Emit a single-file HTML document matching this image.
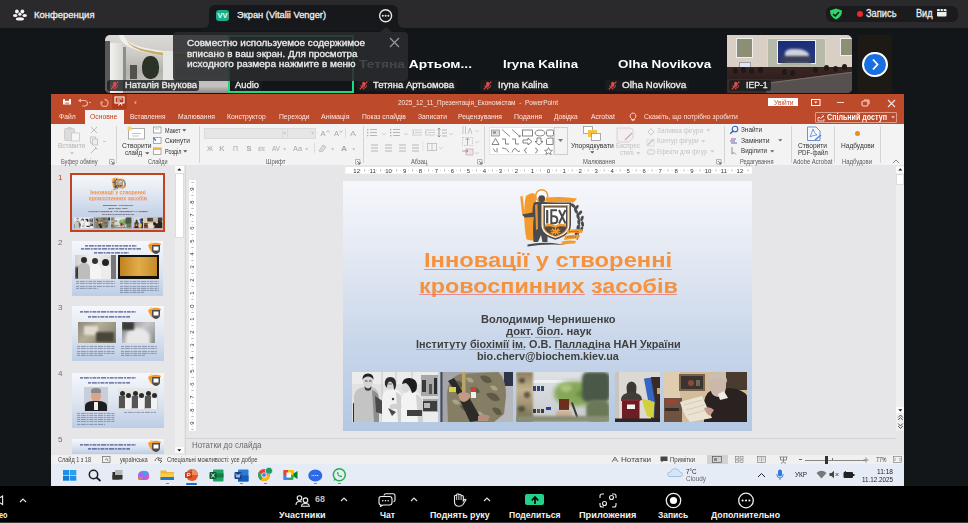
<!DOCTYPE html>
<html><head><meta charset="utf-8">
<style>
*{margin:0;padding:0;box-sizing:border-box}
html,body{width:968px;height:523px;overflow:hidden;background:#131619;font-family:"Liberation Sans",sans-serif}
.a{position:absolute;display:block}
.t{position:absolute;white-space:nowrap;line-height:1;transform-origin:0 50%}
#w{position:absolute;left:0;top:0;width:968px;height:523px;overflow:hidden;filter:blur(0.4px)}
</style></head><body><div id="w">
<div class="a" style="left:0px;top:0px;width:968px;height:28px;background:#2a2a2c;"></div>
<div class="a" style="left:203px;top:22px;width:6px;height:9px;background:#16181b;"></div>
<div class="a" style="left:398px;top:22px;width:6px;height:9px;background:#16181b;"></div>
<div class="a" style="left:197px;top:16px;width:12px;height:12px;background:#2a2a2c;border-radius:0 0 6px 0"></div>
<div class="a" style="left:398px;top:16px;width:12px;height:12px;background:#2a2a2c;border-radius:0 0 0 6px"></div>
<div class="a" style="left:209px;top:5px;width:189px;height:26px;background:#16181b;border-radius:6px 6px 0 0"></div>
<svg class="a" style="left:12px;top:8px;" width="16" height="14" viewBox="0 0 16 14"><g fill="#f4f4f4"><circle cx="4.9" cy="3.5" r="1.9"/><circle cx="10.4" cy="3.5" r="1.9"/><ellipse cx="3.2" cy="7.4" rx="2.2" ry="1.5"/><ellipse cx="12.7" cy="7.4" rx="2.2" ry="1.5"/><circle cx="7.9" cy="6.2" r="1.6"/><ellipse cx="7.9" cy="10.9" rx="4.1" ry="1.6"/></g></svg>
<div class="t" style="transform:scaleX(1.028);left:34px;top:10.91px;font-size:9.2px;color:#ececec;-webkit-text-stroke:0.3px currentColor;">Конференция</div>
<div class="a" style="left:216px;top:10px;width:13px;height:11px;background:#1fae8a;border-radius:3px"></div>
<div class="t" style="left:217.5px;top:12.12px;font-size:7.5px;color:#e8fff6;font-weight:bold;">VV</div>
<div class="t" style="transform:scaleX(1.011);left:237px;top:11.41px;font-size:9.2px;color:#f0f0f0;-webkit-text-stroke:0.3px currentColor;">Экран (Vitalii Venger)</div>
<svg class="a" style="left:378px;top:8px;" width="16" height="16" viewBox="0 0 16 16"><circle cx="7.6" cy="7.7" r="6" fill="none" stroke="#e6e6e6" stroke-width="1.4"/><circle cx="4.8" cy="7.7" r="1" fill="#e6e6e6"/><circle cx="7.6" cy="7.7" r="1" fill="#e6e6e6"/><circle cx="10.4" cy="7.7" r="1" fill="#e6e6e6"/></svg>
<div class="a" style="left:826px;top:6px;width:132px;height:16px;background:#1b1b1d;border-radius:6px"></div>
<svg class="a" style="left:829px;top:8px;" width="14" height="12" viewBox="0 0 14 12"><path d="M7 0.5 L13 2.5 Q13 9 7 11.5 Q1 9 1 2.5Z" fill="#2cd66c"/><path d="M4 6 L6.2 8 L10 4" fill="none" stroke="#111" stroke-width="1.5"/></svg>
<div class="a" style="left:856.5px;top:10.7px;width:6px;height:6px;border-radius:50%;background:#ea2a2a"></div>
<div class="t" style="transform:scaleX(0.930);left:866px;top:9.40px;font-size:10px;color:#ececec;-webkit-text-stroke:0.3px currentColor;">Запись</div>
<div class="t" style="transform:scaleX(0.912);left:915.5px;top:9.40px;font-size:10px;color:#ececec;-webkit-text-stroke:0.3px currentColor;">Вид</div>
<svg class="a" style="left:937px;top:9px;" width="10" height="8" viewBox="0 0 10 8"><rect x="0" y="0" width="9.5" height="7.5" rx="1" fill="#eee"/><path d="M0 2.5H9.5M3.2 0V2.5M6.3 0V2.5" stroke="#252527" stroke-width="0.9"/></svg>
<div class="a" style="left:105px;top:35px;width:124px;height:58px;border-radius:5px 0 0 5px;overflow:hidden;background:linear-gradient(180deg,#dcdad6 0%,#cfcdc8 30%,#b4b2ad 62%,#c4c3c0 88%,#8a8986 100%)"><div class="a" style="left:14px;top:-22px;width:130px;height:44px;border-radius:50%;border:5px solid #efefed;border-top-color:#f4f4f2"></div><div class="a" style="left:22px;top:-14px;width:120px;height:36px;border-radius:50%;border-bottom:3px solid #c6ad70"></div><div class="a" style="left:0;top:6px;width:5px;height:52px;background:#5a5955"></div><div class="a" style="left:5px;top:8px;width:13px;height:50px;background:linear-gradient(90deg,#f2f2f0,#d6d6d2)"></div><div class="a" style="left:18px;top:12px;width:3px;height:46px;background:#8e8d88"></div><div class="a" style="left:25px;top:30px;width:7px;height:14px;background:#55514b"></div><div class="a" style="left:37px;top:21px;width:17px;height:23px;border-radius:45%;background:#2b3326"></div><div class="a" style="left:58px;top:16px;width:12px;height:30px;background:#e6e6e4"></div></div>
<div class="a" style="left:228px;top:35px;width:126px;height:58px;background:#131619;border:2px solid #1fd97f"></div>
<div class="t" style="transform:scaleX(1.311);left:359px;top:59.01px;font-size:10.5px;color:#ffffff;font-weight:bold;">Тетяна Артьом...</div>
<div class="t" style="transform:scaleX(1.260);left:503px;top:59.01px;font-size:10.5px;color:#ffffff;font-weight:bold;">Iryna Kalina</div>
<div class="t" style="transform:scaleX(1.279);left:618.3px;top:59.01px;font-size:10.5px;color:#ffffff;font-weight:bold;">Olha Novikova</div>
<div class="a" style="left:727px;top:35px;width:125px;height:58px;border-radius:0 5px 5px 0;overflow:hidden;background:#d9cfc4"><div class="a" style="left:9.4px;top:3.4px;width:16.6px;height:19.6px;background:#8c8e76;border:1px solid #eef0ee"></div><div class="a" style="left:113px;top:3.4px;width:13px;height:17.6px;background:#8c8e76;border:1px solid #eef0ee"></div><div class="a" style="left:39.6px;top:2.7px;width:59.8px;height:31px;background:#b7baa9;border:1px solid #d8dcd0"></div><div class="a" style="left:49.7px;top:5.4px;width:39px;height:24px;background:linear-gradient(#1b2d78,#23357e 60%,#2a3468);border:1.5px solid #eef0f2"></div><div class="a" style="left:58px;top:14px;width:24px;height:13px;background:#cfd3dc;border-radius:30% 50% 10% 10%;filter:blur(0.8px)"></div><div class="a" style="left:54px;top:21px;width:30px;height:7px;background:#3a3f55;filter:blur(0.8px)"></div><div class="a" style="left:12px;top:26.5px;width:11.5px;height:10px;background:#dfe6f2;border:1px solid #9aa0a8"></div><div class="a" style="left:0;top:32px;width:125px;height:13px;background:linear-gradient(#3c2624,#2e1e1d);filter:blur(0.6px)"></div><div class="a" style="left:6px;top:33px;width:5px;height:6px;border-radius:50%;background:#1e1a1a;filter:blur(0.5px)"></div><div class="a" style="left:14px;top:32px;width:5px;height:6px;border-radius:50%;background:#1e1a1a;filter:blur(0.5px)"></div><div class="a" style="left:22px;top:33px;width:5px;height:6px;border-radius:50%;background:#1e1a1a;filter:blur(0.5px)"></div><div class="a" style="left:31px;top:32px;width:5px;height:6px;border-radius:50%;background:#1e1a1a;filter:blur(0.5px)"></div><div class="a" style="left:55px;top:34px;width:5px;height:6px;border-radius:50%;background:#1e1a1a;filter:blur(0.5px)"></div><div class="a" style="left:63px;top:35px;width:5px;height:6px;border-radius:50%;background:#1e1a1a;filter:blur(0.5px)"></div><div class="a" style="left:86px;top:32px;width:5px;height:6px;border-radius:50%;background:#1e1a1a;filter:blur(0.5px)"></div><div class="a" style="left:97px;top:30px;width:5px;height:6px;border-radius:50%;background:#1e1a1a;filter:blur(0.5px)"></div><div class="a" style="left:106px;top:31px;width:5px;height:6px;border-radius:50%;background:#1e1a1a;filter:blur(0.5px)"></div><div class="a" style="left:115px;top:29px;width:5px;height:6px;border-radius:50%;background:#1e1a1a;filter:blur(0.5px)"></div><div class="a" style="left:0;top:44px;width:125px;height:14px;background:#3a2c2a"></div><div class="a" style="left:38px;top:47.5px;width:100px;height:30px;background:#56504f;border-top:1.5px solid #7a6e66;transform:rotate(-7.3deg);transform-origin:0 0"></div></div>
<div class="a" style="left:857.5px;top:35px;width:34.5px;height:58px;background:#1d1915;"></div>
<div class="a" style="left:862.4px;top:51.7px;width:25.2px;height:25.2px;border-radius:50%;background:#1a6fe0;border:2px solid #fff"></div>
<svg class="a" style="left:870px;top:58px;" width="10" height="13" viewBox="0 0 10 13"><path d="M3 1.5 L7.5 6.5 L3 11.5" fill="none" stroke="#fff" stroke-width="1.8"/></svg>
<div class="a" style="left:107.4px;top:80.2px;width:91.4px;height:11.2px;background:rgba(28,29,32,0.82);border-radius:3px"></div>
<svg class="a" style="left:109.60000000000001px;top:81.2px;" width="9" height="9" viewBox="0 0 9 9"><rect x="3.2" y="0.8" width="3" height="5" rx="1.5" fill="#e24b4b"/><path d="M1.8 4.2 Q1.8 7.2 4.7 7.2 Q7.6 7.2 7.6 4.2 M4.7 7.2 V8.6" fill="none" stroke="#e24b4b" stroke-width="0.9"/><path d="M0.8 8.4 L8.4 0.6" stroke="#e24b4b" stroke-width="1.1"/></svg>
<div class="t" style="transform:scaleX(1.129);left:124.5px;top:81.37px;font-size:8.3px;color:#ececec;-webkit-text-stroke:0.3px currentColor;">Наталія Внукова</div>
<div class="a" style="left:231px;top:80.2px;width:31px;height:11.2px;background:rgba(28,29,32,0.82);border-radius:3px"></div>
<div class="t" style="transform:scaleX(1.130);left:234.5px;top:81.37px;font-size:8.3px;color:#ececec;-webkit-text-stroke:0.3px currentColor;">Audio</div>
<div class="a" style="left:357px;top:80.2px;width:100px;height:11.2px;background:rgba(28,29,32,0.82);border-radius:3px"></div>
<svg class="a" style="left:359.2px;top:81.2px;" width="9" height="9" viewBox="0 0 9 9"><rect x="3.2" y="0.8" width="3" height="5" rx="1.5" fill="#e24b4b"/><path d="M1.8 4.2 Q1.8 7.2 4.7 7.2 Q7.6 7.2 7.6 4.2 M4.7 7.2 V8.6" fill="none" stroke="#e24b4b" stroke-width="0.9"/><path d="M0.8 8.4 L8.4 0.6" stroke="#e24b4b" stroke-width="1.1"/></svg>
<div class="t" style="transform:scaleX(1.146);left:373px;top:81.37px;font-size:8.3px;color:#ececec;-webkit-text-stroke:0.3px currentColor;">Тетяна Артьомова</div>
<div class="a" style="left:480.4px;top:80.2px;width:70.6px;height:11.2px;background:rgba(28,29,32,0.82);border-radius:3px"></div>
<svg class="a" style="left:482.59999999999997px;top:81.2px;" width="9" height="9" viewBox="0 0 9 9"><rect x="3.2" y="0.8" width="3" height="5" rx="1.5" fill="#e24b4b"/><path d="M1.8 4.2 Q1.8 7.2 4.7 7.2 Q7.6 7.2 7.6 4.2 M4.7 7.2 V8.6" fill="none" stroke="#e24b4b" stroke-width="0.9"/><path d="M0.8 8.4 L8.4 0.6" stroke="#e24b4b" stroke-width="1.1"/></svg>
<div class="t" style="transform:scaleX(1.141);left:497.5px;top:81.37px;font-size:8.3px;color:#ececec;-webkit-text-stroke:0.3px currentColor;">Iryna Kalina</div>
<div class="a" style="left:605.4px;top:80.2px;width:83.6px;height:11.2px;background:rgba(28,29,32,0.82);border-radius:3px"></div>
<svg class="a" style="left:607.6px;top:81.2px;" width="9" height="9" viewBox="0 0 9 9"><rect x="3.2" y="0.8" width="3" height="5" rx="1.5" fill="#e24b4b"/><path d="M1.8 4.2 Q1.8 7.2 4.7 7.2 Q7.6 7.2 7.6 4.2 M4.7 7.2 V8.6" fill="none" stroke="#e24b4b" stroke-width="0.9"/><path d="M0.8 8.4 L8.4 0.6" stroke="#e24b4b" stroke-width="1.1"/></svg>
<div class="t" style="transform:scaleX(1.191);left:621.7px;top:81.37px;font-size:8.3px;color:#ececec;-webkit-text-stroke:0.3px currentColor;">Olha Novikova</div>
<div class="a" style="left:729px;top:80.2px;width:42px;height:11.2px;background:rgba(28,29,32,0.82);border-radius:3px"></div>
<svg class="a" style="left:731.2px;top:81.2px;" width="9" height="9" viewBox="0 0 9 9"><rect x="3.2" y="0.8" width="3" height="5" rx="1.5" fill="#e24b4b"/><path d="M1.8 4.2 Q1.8 7.2 4.7 7.2 Q7.6 7.2 7.6 4.2 M4.7 7.2 V8.6" fill="none" stroke="#e24b4b" stroke-width="0.9"/><path d="M0.8 8.4 L8.4 0.6" stroke="#e24b4b" stroke-width="1.1"/></svg>
<div class="t" style="transform:scaleX(1.040);left:746.4px;top:81.37px;font-size:8.3px;color:#ececec;-webkit-text-stroke:0.3px currentColor;">IEP-1</div>
<div class="a" style="left:173.3px;top:31.9px;width:234.7px;height:49.6px;background:rgba(42,43,46,0.88);border-radius:4px"></div>
<svg class="a" style="left:379px;top:27px;" width="14" height="6" viewBox="0 0 14 6"><path d="M0 6 L7 0 L14 6Z" fill="rgba(42,43,46,0.88)"/></svg>
<div class="t" style="transform:scaleX(1.101);left:186.6px;top:39.08px;font-size:9px;color:#ececec;-webkit-text-stroke:0.3px currentColor;">Совместно используемое содержимое</div>
<div class="t" style="transform:scaleX(1.099);left:186.6px;top:49.98px;font-size:9px;color:#ececec;-webkit-text-stroke:0.3px currentColor;">вписано в ваш экран. Для просмотра</div>
<div class="t" style="transform:scaleX(1.115);left:186.6px;top:60.48px;font-size:9px;color:#ececec;-webkit-text-stroke:0.3px currentColor;">исходного размера нажмите в меню</div>
<svg class="a" style="left:389px;top:37px;" width="11" height="11" viewBox="0 0 11 11"><path d="M1 1L10 10M10 1L1 10" stroke="#9a9a9c" stroke-width="1.2"/></svg>
<div class="a" style="left:51px;top:94.4px;width:853px;height:29.6px;background:#bd4a2b;"></div>
<div class="a" style="left:51px;top:124px;width:853px;height:41px;background:#f3f3f3;"></div>
<div class="a" style="left:51px;top:165px;width:853px;height:290px;background:#e6e6e9;"></div>
<div class="a" style="left:51px;top:455px;width:853px;height:9px;background:#f0f0f0;"></div>
<div class="a" style="left:51px;top:464px;width:853px;height:21.5px;background:#e6ecf5;"></div>
<svg class="a" style="left:63px;top:99px;" width="9" height="6" viewBox="0 0 9 6"><rect x="0" y="0" width="8" height="5.5" rx="0.6" fill="#fff"/><rect x="2" y="0" width="4" height="1.8" fill="#bd4a2b"/><rect x="1.8" y="3.3" width="4.4" height="2.2" fill="#d9a090"/></svg>
<svg class="a" style="left:77px;top:98px;" width="12" height="9" viewBox="0 0 12 9"><path d="M3 2.5 H7 Q10.5 2.5 10.5 5.5 Q10.5 8 7 8 H5" fill="none" stroke="#f0b3a0" stroke-width="1.2"/><path d="M1 2.5 L4 0.5 L4 4.5Z" fill="#f0b3a0"/></svg>
<div class="a" style="left:89px;top:102px;width:2px;height:1px;background:#e9a48f;"></div>
<svg class="a" style="left:99px;top:98px;" width="11" height="9" viewBox="0 0 11 9"><path d="M5.5 1.5 A3.5 3.5 0 1 1 2 5" fill="none" stroke="#f0a48c" stroke-width="1.3"/><path d="M1 4 L3 6.5 L4.2 3Z" fill="#f0a48c"/></svg>
<div class="a" style="left:112.3px;top:94px;width:14.4px;height:15px;background:#b03c1e;"></div>
<svg class="a" style="left:114px;top:96px;" width="11" height="11" viewBox="0 0 11 11"><rect x="1" y="1" width="9" height="6" fill="none" stroke="#fff" stroke-width="1.1"/><path d="M3 3H8M3 5H6" stroke="#fff" stroke-width="0.8"/><path d="M4 9.5 L7 7 L8 9.5" fill="none" stroke="#fff" stroke-width="1"/></svg>
<div class="t" style="transform:scaleX(1.123);left:134px;top:98.90px;font-size:8px;color:#f4d0c4;">‹</div>
<div class="t" style="transform:scaleX(0.808);left:398px;top:99.20px;font-size:8px;color:#f8e6e0;">2025_12_11_Презентація_Економістам&nbsp; - &nbsp;PowerPoint</div>
<div class="a" style="left:768.4px;top:98.3px;width:29.8px;height:7.9px;background:#ffffff;"></div>
<div class="t" style="transform:scaleX(0.894);left:773.5px;top:98.92px;font-size:7.5px;color:#c44b2a;">Увійти</div>
<svg class="a" style="left:811px;top:99px;" width="10" height="7" viewBox="0 0 10 7"><rect x="0.5" y="0.5" width="8.5" height="6" fill="none" stroke="#fff" stroke-width="1"/><path d="M3 2.5 L4.7 4.5 L6.5 2.5" fill="#fff"/></svg>
<div class="a" style="left:836.5px;top:102px;width:7px;height:1px;background:#f5d8ce;"></div>
<svg class="a" style="left:861px;top:98.5px;" width="9" height="8" viewBox="0 0 9 8"><rect x="1" y="2" width="6" height="5" rx="1.5" fill="none" stroke="#f5d8ce" stroke-width="1.1"/><path d="M3 1 H8 V5" fill="none" stroke="#f5d8ce" stroke-width="1"/></svg>
<svg class="a" style="left:886.5px;top:98.5px;" width="9" height="9" viewBox="0 0 9 9"><path d="M1 1L8 8M8 1L1 8" stroke="#f8e4dc" stroke-width="1.1"/></svg>
<div class="a" style="left:85.3px;top:109.8px;width:38.7px;height:14.2px;background:#f3f3f3;"></div>
<div class="t" style="transform:scaleX(0.844);left:59px;top:113.20px;font-size:8px;color:#fbe9e3;">Файл</div>
<div class="t" style="transform:scaleX(0.810);left:130.3px;top:113.20px;font-size:8px;color:#fbe9e3;">Вставлення</div>
<div class="t" style="transform:scaleX(0.845);left:178.3px;top:113.20px;font-size:8px;color:#fbe9e3;">Малювання</div>
<div class="t" style="transform:scaleX(0.848);left:227.3px;top:113.20px;font-size:8px;color:#fbe9e3;">Конструктор</div>
<div class="t" style="transform:scaleX(0.841);left:278.5px;top:113.20px;font-size:8px;color:#fbe9e3;">Переходи</div>
<div class="t" style="transform:scaleX(0.886);left:321px;top:113.20px;font-size:8px;color:#fbe9e3;">Анімація</div>
<div class="t" style="transform:scaleX(0.838);left:361.6px;top:113.20px;font-size:8px;color:#fbe9e3;">Показ слайдів</div>
<div class="t" style="transform:scaleX(0.838);left:417.6px;top:113.20px;font-size:8px;color:#fbe9e3;">Записати</div>
<div class="t" style="transform:scaleX(0.844);left:458px;top:113.20px;font-size:8px;color:#fbe9e3;">Рецензування</div>
<div class="t" style="transform:scaleX(0.867);left:514px;top:113.20px;font-size:8px;color:#fbe9e3;">Подання</div>
<div class="t" style="transform:scaleX(0.820);left:554.4px;top:113.20px;font-size:8px;color:#fbe9e3;">Довідка</div>
<div class="t" style="transform:scaleX(0.863);left:590.6px;top:113.20px;font-size:8px;color:#fbe9e3;">Acrobat</div>
<div class="t" style="transform:scaleX(0.847);left:90.3px;top:113.20px;font-size:8px;color:#c4431f;">Основне</div>
<svg class="a" style="left:629px;top:112px;" width="8" height="10" viewBox="0 0 8 10"><path d="M4 1 A3 3 0 0 1 6.5 5.5 Q5.5 6.5 5.5 7.5 H2.5 Q2.5 6.5 1.5 5.5 A3 3 0 0 1 4 1Z" fill="none" stroke="#fbe3da" stroke-width="0.9"/><path d="M2.7 8.6H5.3" stroke="#fbe3da" stroke-width="0.8"/></svg>
<div class="t" style="transform:scaleX(0.850);left:643.6px;top:113.20px;font-size:8px;color:#fbe3da;">Скажіть, що потрібно зробити</div>
<div class="a" style="left:814.7px;top:111.9px;width:82.3px;height:10.8px;background:transparent;border:1px solid rgba(255,220,205,0.55);border-radius:1px"></div>
<svg class="a" style="left:817px;top:113.5px;" width="8" height="8" viewBox="0 0 8 8"><path d="M1 7 V3.5 H3 M1 7 H7 V5" fill="none" stroke="#fde" stroke-width="0.9"/><path d="M3.5 5 Q4 2.5 6.5 2.2 M5.5 1 L7 2.2 L5.5 3.4" fill="none" stroke="#fde" stroke-width="0.9"/></svg>
<div class="t" style="transform:scaleX(0.837);left:827px;top:113.47px;font-size:8.5px;color:#ffffff;font-weight:bold;">Спільний доступ</div>
<svg class="a" style="left:890.5px;top:116.0px;" width="4.5" height="3" viewBox="0 0 4.5 3"><path d="M0.2 0.3 H4 L2.00 2.6Z" fill="#f5c8b8"/></svg>
<div class="a" style="left:116.3px;top:126px;width:1px;height:37px;background:#d4d4d4;"></div>
<div class="a" style="left:199.3px;top:126px;width:1px;height:37px;background:#d4d4d4;"></div>
<div class="a" style="left:363.2px;top:126px;width:1px;height:37px;background:#d4d4d4;"></div>
<div class="a" style="left:483.8px;top:126px;width:1px;height:37px;background:#d4d4d4;"></div>
<div class="a" style="left:723.9px;top:126px;width:1px;height:37px;background:#d4d4d4;"></div>
<div class="a" style="left:790.7px;top:126px;width:1px;height:37px;background:#d4d4d4;"></div>
<div class="a" style="left:834.3px;top:126px;width:1px;height:37px;background:#d4d4d4;"></div>
<div class="a" style="left:880.2px;top:126px;width:1px;height:37px;background:#d4d4d4;"></div>
<div class="t" style="transform:scaleX(0.793);left:60.8px;top:158.36px;font-size:7.2px;color:#5a5a5a;">Буфер обміну</div>
<div class="t" style="transform:scaleX(0.761);left:148px;top:158.36px;font-size:7.2px;color:#5a5a5a;">Слайди</div>
<div class="t" style="transform:scaleX(0.820);left:266.3px;top:158.36px;font-size:7.2px;color:#5a5a5a;">Шрифт</div>
<div class="t" style="transform:scaleX(0.808);left:410.5px;top:158.36px;font-size:7.2px;color:#5a5a5a;">Абзац</div>
<div class="t" style="transform:scaleX(0.811);left:583px;top:158.36px;font-size:7.2px;color:#5a5a5a;">Малювання</div>
<div class="t" style="transform:scaleX(0.792);left:740px;top:158.36px;font-size:7.2px;color:#5a5a5a;">Редагування</div>
<div class="t" style="transform:scaleX(0.838);left:792.5px;top:158.36px;font-size:7.2px;color:#5a5a5a;">Adobe Acrobat</div>
<div class="t" style="transform:scaleX(0.817);left:842px;top:158.36px;font-size:7.2px;color:#5a5a5a;">Надбудови</div>
<svg class="a" style="left:108.5px;top:158.5px;" width="6" height="6" viewBox="0 0 6 6"><path d="M0.5 0.5 H5 V5 H0.5Z" fill="none" stroke="#9a9a9a" stroke-width="0.7"/><path d="M2 2 L5 5 M3 5 H5 V3" fill="none" stroke="#666" stroke-width="0.8"/></svg>
<svg class="a" style="left:355px;top:158.5px;" width="6" height="6" viewBox="0 0 6 6"><path d="M0.5 0.5 H5 V5 H0.5Z" fill="none" stroke="#9a9a9a" stroke-width="0.7"/><path d="M2 2 L5 5 M3 5 H5 V3" fill="none" stroke="#666" stroke-width="0.8"/></svg>
<svg class="a" style="left:476.5px;top:158.5px;" width="6" height="6" viewBox="0 0 6 6"><path d="M0.5 0.5 H5 V5 H0.5Z" fill="none" stroke="#9a9a9a" stroke-width="0.7"/><path d="M2 2 L5 5 M3 5 H5 V3" fill="none" stroke="#666" stroke-width="0.8"/></svg>
<svg class="a" style="left:716px;top:158.5px;" width="6" height="6" viewBox="0 0 6 6"><path d="M0.5 0.5 H5 V5 H0.5Z" fill="none" stroke="#9a9a9a" stroke-width="0.7"/><path d="M2 2 L5 5 M3 5 H5 V3" fill="none" stroke="#666" stroke-width="0.8"/></svg>
<svg class="a" style="left:892px;top:159px;" width="8" height="5" viewBox="0 0 8 5"><path d="M1 4 L4 1 L7 4" fill="none" stroke="#777" stroke-width="0.9"/></svg>
<svg class="a" style="left:63px;top:126px;" width="19" height="16" viewBox="0 0 19 16"><rect x="1.5" y="2.5" width="10" height="12" rx="1" fill="#dcdcdc" stroke="#c8c8c8" stroke-width="0.8"/><rect x="4.5" y="1" width="4" height="2.5" rx="0.8" fill="#cfcfcf"/><rect x="8.5" y="7" width="8" height="8" fill="#f7f7f7" stroke="#c8c8c8" stroke-width="0.8"/></svg>
<div class="t" style="transform:scaleX(0.845);left:57.8px;top:142.22px;font-size:7.5px;color:#b4b4b4;">Вставити</div>
<svg class="a" style="left:69.5px;top:151.5px;" width="4.3" height="3" viewBox="0 0 4.3 3"><path d="M0.2 0.3 H3.8 L1.90 2.6Z" fill="#c0c0c0"/></svg>
<svg class="a" style="left:89px;top:126px;" width="10" height="29" viewBox="0 0 10 29"><path d="M2 1 L8 7 M8 1 L2 7" stroke="#b8b8b8" stroke-width="0.9"/><rect x="1.5" y="11" width="5" height="6" fill="none" stroke="#bbb" stroke-width="0.8"/><rect x="3.5" y="13" width="5" height="6" fill="#eee" stroke="#bbb" stroke-width="0.8"/><path d="M2 27 L7 22 M6 21 L8.5 23.5" stroke="#b8b8b8" stroke-width="1"/></svg>
<div class="a" style="left:103px;top:141px;width:3px;height:1px;background:#c8c8c8;"></div>
<svg class="a" style="left:127px;top:126px;" width="19" height="14" viewBox="0 0 19 14"><rect x="1.5" y="2.5" width="16" height="10.5" fill="#fff" stroke="#9a9a9a" stroke-width="0.8"/><rect x="0.5" y="0.5" width="4" height="4" fill="#f5d36a"/><path d="M5 7.5H14M5 10H12" stroke="#b8b8b8" stroke-width="0.8"/></svg>
<div class="t" style="transform:scaleX(0.840);left:121.5px;top:142.00px;font-size:8px;color:#333;">Створити</div>
<div class="t" style="transform:scaleX(0.764);left:124.8px;top:149.30px;font-size:8px;color:#333;">слайд</div>
<svg class="a" style="left:144.5px;top:151.7px;" width="4.9" height="3" viewBox="0 0 4.9 3"><path d="M0.2 0.3 H4.4 L2.20 2.6Z" fill="#555"/></svg>
<svg class="a" style="left:153px;top:126px;" width="9" height="30" viewBox="0 0 9 30"><rect x="0.5" y="1" width="7.5" height="6" fill="#fff" stroke="#888" stroke-width="0.7"/><path d="M2 3H6" stroke="#aaa" stroke-width="0.7"/><rect x="0.5" y="11.5" width="7.5" height="6" fill="#fff" stroke="#888" stroke-width="0.7"/><path d="M0.5 12 L3 14.5" stroke="#2d6fd0" stroke-width="1.2"/><rect x="0.5" y="22" width="7.5" height="6.5" fill="#fff" stroke="#888" stroke-width="0.7"/><rect x="0.5" y="22" width="7.5" height="2" fill="#f2b340"/></svg>
<div class="t" style="transform:scaleX(0.685);left:164.7px;top:126.70px;font-size:8px;color:#333;">Макет</div>
<svg class="a" style="left:182px;top:129.2px;" width="4.9" height="3" viewBox="0 0 4.9 3"><path d="M0.2 0.3 H4.4 L2.20 2.6Z" fill="#555"/></svg>
<div class="t" style="transform:scaleX(0.819);left:164.7px;top:137.00px;font-size:8px;color:#333;">Скинути</div>
<div class="t" style="transform:scaleX(0.689);left:164.7px;top:147.70px;font-size:8px;color:#333;">Розділ</div>
<svg class="a" style="left:183px;top:150.2px;" width="4.9" height="3" viewBox="0 0 4.9 3"><path d="M0.2 0.3 H4.4 L2.20 2.6Z" fill="#555"/></svg>
<div class="a" style="left:203.5px;top:127.7px;width:84px;height:11.7px;background:#e6e6e6;border:1px solid #dadada"></div>
<div class="a" style="left:282px;top:128.5px;width:1px;height:10px;background:#dadada;"></div>
<svg class="a" style="left:283.3px;top:132.29999999999998px;" width="3.7" height="3" viewBox="0 0 3.7 3"><path d="M0.2 0.3 H3.2 L1.60 2.6Z" fill="#c4c4c4"/></svg>
<div class="a" style="left:287.2px;top:127.7px;width:28.7px;height:11.7px;background:#e6e6e6;border:1px solid #dadada"></div>
<svg class="a" style="left:311px;top:132.29999999999998px;" width="3.7" height="3" viewBox="0 0 3.7 3"><path d="M0.2 0.3 H3.2 L1.60 2.6Z" fill="#c4c4c4"/></svg>
<div class="t" style="left:320.5px;top:130.12px;font-size:7.5px;color:#a5a5a5;">A</div>
<div class="t" style="left:334px;top:130.12px;font-size:7.5px;color:#a5a5a5;">A</div>
<svg class="a" style="left:325.5px;top:129.5px;" width="4" height="3" viewBox="0 0 4 3"><path d="M0.5 2.5 L2 0.5 L3.5 2.5" fill="none" stroke="#aaa" stroke-width="0.7"/></svg>
<svg class="a" style="left:339px;top:129.5px;" width="4" height="3" viewBox="0 0 4 3"><path d="M0.5 0.5 L2 2.5 L3.5 0.5" fill="none" stroke="#aaa" stroke-width="0.7"/></svg>
<div class="a" style="left:344.5px;top:128px;width:1px;height:10px;background:#dcdcdc;"></div>
<div class="t" style="transform:scaleX(1.196);left:349.5px;top:129.62px;font-size:7.5px;color:#b0b0b0;">A</div>
<div class="t" style="transform:scaleX(0.865);left:207px;top:144.93px;font-size:7.5px;color:#a8a8a8;">Ж</div>
<div class="t" style="transform:scaleX(1.257);left:219px;top:144.93px;font-size:7.5px;color:#a8a8a8;">К</div>
<div class="t" style="transform:scaleX(0.928);left:232.5px;top:144.93px;font-size:7.5px;color:#a8a8a8;">П</div>
<div class="t" style="left:246.5px;top:144.93px;font-size:7.5px;color:#a8a8a8;font-weight:bold;">S</div>
<div class="t" style="transform:scaleX(0.579);left:257.5px;top:144.93px;font-size:7.5px;color:#a8a8a8;">abc</div>
<div class="t" style="transform:scaleX(0.846);left:272px;top:144.93px;font-size:7.5px;color:#a8a8a8;">AV</div>
<div class="t" style="transform:scaleX(0.980);left:293px;top:144.93px;font-size:7.5px;color:#a8a8a8;">Aa</div>
<div class="t" style="transform:scaleX(1.107);left:341px;top:144.93px;font-size:7.5px;color:#a8a8a8;font-weight:bold;">A</div>
<svg class="a" style="left:283px;top:147.5px;" width="3.9" height="3" viewBox="0 0 3.9 3"><path d="M0.2 0.3 H3.4 L1.70 2.6Z" fill="#c0c0c0"/></svg>
<svg class="a" style="left:305px;top:147.5px;" width="3.9" height="3" viewBox="0 0 3.9 3"><path d="M0.2 0.3 H3.4 L1.70 2.6Z" fill="#c0c0c0"/></svg>
<svg class="a" style="left:330.5px;top:147.5px;" width="3.9" height="3" viewBox="0 0 3.9 3"><path d="M0.2 0.3 H3.4 L1.70 2.6Z" fill="#c0c0c0"/></svg>
<svg class="a" style="left:351.5px;top:147.5px;" width="3.9" height="3" viewBox="0 0 3.9 3"><path d="M0.2 0.3 H3.4 L1.70 2.6Z" fill="#c0c0c0"/></svg>
<div class="a" style="left:313.5px;top:143px;width:1px;height:10px;background:#dcdcdc;"></div>
<svg class="a" style="left:318px;top:144px;" width="9" height="8" viewBox="0 0 9 8"><path d="M1 7 L5 1 L8 3 L4 8Z" fill="#ddd" stroke="#aaa" stroke-width="0.6"/></svg>
<svg class="a" style="left:360px;top:124px;" width="130" height="40" viewBox="0 0 130 40"><rect x="7" y="4.9" width="1.4" height="1.4" fill="#b0b0b0"/><path d="M10 5.5H17" stroke="#b0b0b0" stroke-width="0.9"/><rect x="7" y="7.9" width="1.4" height="1.4" fill="#b0b0b0"/><path d="M10 8.5H17" stroke="#b0b0b0" stroke-width="0.9"/><rect x="7" y="10.9" width="1.4" height="1.4" fill="#b0b0b0"/><path d="M10 11.5H17" stroke="#b0b0b0" stroke-width="0.9"/><path d="M22 9 L24 11 L26 9" fill="none" stroke="#bbb" stroke-width="0.6"/><rect x="30" y="4.9" width="1.4" height="1.4" fill="#b0b0b0"/><path d="M33 5.5H40" stroke="#b0b0b0" stroke-width="0.9"/><rect x="30" y="7.9" width="1.4" height="1.4" fill="#b0b0b0"/><path d="M33 8.5H40" stroke="#b0b0b0" stroke-width="0.9"/><rect x="30" y="10.9" width="1.4" height="1.4" fill="#b0b0b0"/><path d="M33 11.5H40" stroke="#b0b0b0" stroke-width="0.9"/><path d="M44 9 L46 11 L48 9" fill="none" stroke="#bbb" stroke-width="0.6"/><path d="M52 6H62M55 8.5H62M52 11H62" stroke="#c4c4c4" stroke-width="0.8"/><path d="M52.5 7.2 L54 8.5 L52.5 9.8" fill="none" stroke="#999" stroke-width="0.7"/><path d="M65 6H75M68 8.5H75M65 11H75" stroke="#c4c4c4" stroke-width="0.8"/><path d="M66.5 7.2 L65 8.5 L66.5 9.8" fill="none" stroke="#999" stroke-width="0.7"/><path d="M79 4V13M77.5 5.5L79 4L80.5 5.5M77.5 11.5L79 13L80.5 11.5" fill="none" stroke="#888" stroke-width="0.8"/><path d="M82 6H87" stroke="#b0b0b0" stroke-width="0.9"/><path d="M82 9H87" stroke="#b0b0b0" stroke-width="0.9"/><path d="M82 12H87" stroke="#b0b0b0" stroke-width="0.9"/><path d="M89 9 L91 11 L93 9" fill="none" stroke="#bbb" stroke-width="0.6"/><path d="M11 21H18" stroke="#b0b0b0" stroke-width="0.9"/><path d="M11 24H18" stroke="#b0b0b0" stroke-width="0.9"/><path d="M11 27H18" stroke="#b0b0b0" stroke-width="0.9"/><path d="M25 21H32" stroke="#b0b0b0" stroke-width="0.9"/><path d="M25 24H32" stroke="#b0b0b0" stroke-width="0.9"/><path d="M25 27H32" stroke="#b0b0b0" stroke-width="0.9"/><path d="M39 21H46" stroke="#b0b0b0" stroke-width="0.9"/><path d="M39 24H46" stroke="#b0b0b0" stroke-width="0.9"/><path d="M39 27H46" stroke="#b0b0b0" stroke-width="0.9"/><path d="M52 21H59" stroke="#b0b0b0" stroke-width="0.9"/><path d="M52 24H59" stroke="#b0b0b0" stroke-width="0.9"/><path d="M52 27H59" stroke="#b0b0b0" stroke-width="0.9"/><path d="M63 17V27" stroke="#ddd" stroke-width="0.8"/><rect x="67.5" y="19.5" width="9" height="7" fill="none" stroke="#bbb" stroke-width="0.8"/><path d="M72 19.5V26.5" stroke="#bbb" stroke-width="0.8"/><path d="M79 23 L81 25 L83 23" fill="none" stroke="#bbb" stroke-width="0.6"/><path d="M103 2V10M105.5 2V10M108 10 L110 4 L112 10" fill="none" stroke="#b9b9b9" stroke-width="0.8"/><path d="M115 6L117 8L119 6" fill="none" stroke="#bbb" stroke-width="0.6"/><rect x="102.5" y="13.5" width="10" height="8" fill="none" stroke="#b9b9b9" stroke-width="0.7" stroke-dasharray="1.5 1"/><path d="M107.5 14V21M105.5 16L107.5 14L109.5 16" fill="none" stroke="#b78" stroke-width="0.7"/><path d="M115 17L117 19L119 17" fill="none" stroke="#bbb" stroke-width="0.6"/><rect x="106" y="25" width="7" height="6" fill="#f3e0e8" stroke="#c8a5b5" stroke-width="0.7"/><path d="M102 27H108M106 25.5 L108 27 L106 28.5" fill="none" stroke="#888" stroke-width="0.7"/><path d="M115 28L117 30L119 28" fill="none" stroke="#bbb" stroke-width="0.6"/></svg>
<div class="a" style="left:489px;top:127px;width:65px;height:27.5px;background:#ffffff;border:1px solid #e3e3e3"></div>
<div class="a" style="left:554px;top:127px;width:13.6px;height:27.5px;background:#f3f3f3;border:1px solid #cfcfcf"></div>
<div class="t" style="transform:scaleX(1.667);left:557.5px;top:136.80px;font-size:6px;color:#777;">▾</div>
<svg class="a" style="left:489px;top:127px;" width="65" height="28" viewBox="0 0 65 28"><rect x="2.5" y="3" width="8" height="6" fill="#ddd" stroke="#888" stroke-width="0.7"/><rect x="4" y="4.5" width="3" height="2" fill="#888"/><path d="M13 2.5L21 9.5" stroke="#666" stroke-width="0.8"/><path d="M23 2.5L31 9.5M29.5 9.8L31.2 9.7L31 8" stroke="#666" stroke-width="0.8" fill="none"/><rect x="33.5" y="3" width="10" height="6" fill="none" stroke="#666" stroke-width="0.8"/><ellipse cx="51" cy="6" rx="5" ry="3" fill="none" stroke="#666" stroke-width="0.8"/><rect x="57.5" y="3" width="7" height="6" rx="1.5" fill="none" stroke="#666" stroke-width="0.8"/><path d="M3 17.5L6.5 11.5L10 17.5Z" fill="none" stroke="#666" stroke-width="0.8"/><path d="M13 12H16.5V17H20" fill="none" stroke="#666" stroke-width="0.8"/><path d="M23 12H26.5V17H30" fill="none" stroke="#666" stroke-width="0.8"/><path d="M34 13H39V11L43 14.5L39 18V16H34Z" fill="none" stroke="#666" stroke-width="0.8"/><path d="M48 11H52V14.5H54L50 18L46 14.5H48Z" fill="none" stroke="#666" stroke-width="0.8"/><path d="M57.5 12.5Q58 11 61 11H64V17.5H57.5Z" fill="none" stroke="#666" stroke-width="0.8"/><path d="M4 21.5L6.5 25M8 21V25.5" stroke="#666" stroke-width="0.8"/><path d="M13 21Q18 21 20 25.5" fill="none" stroke="#666" stroke-width="0.8"/><path d="M23 25.5Q25 20 27 22Q29 26 31 24" fill="none" stroke="#666" stroke-width="0.8"/><path d="M38 21Q36 21 36 23.3Q34.5 23.5 36 23.7Q36 26 38 26" fill="none" stroke="#666" stroke-width="0.7"/><path d="M46 21Q48 21 48 23.3Q49.5 23.5 48 23.7Q48 26 46 26" fill="none" stroke="#666" stroke-width="0.7"/><path d="M59.5 20.5L60.7 23.2L63.5 23.3L61.3 25L62.2 27.5L59.5 26L56.8 27.5L57.7 25L55.5 23.3L58.3 23.2Z" fill="none" stroke="#666" stroke-width="0.7"/></svg>
<svg class="a" style="left:583px;top:126px;" width="19" height="15" viewBox="0 0 19 15"><rect x="0.5" y="0.5" width="9" height="7" fill="#fff" stroke="#888" stroke-width="0.7"/><rect x="5" y="4" width="9" height="7" fill="#f1c444"/><rect x="8.5" y="7.5" width="9" height="7" fill="#fff" stroke="#888" stroke-width="0.7"/></svg>
<div class="t" style="transform:scaleX(0.837);left:570.6px;top:141.90px;font-size:8px;color:#333;">Упорядкувати</div>
<svg class="a" style="left:589.5px;top:151.2px;" width="4.9" height="3" viewBox="0 0 4.9 3"><path d="M0.2 0.3 H4.4 L2.20 2.6Z" fill="#555"/></svg>
<svg class="a" style="left:615px;top:126px;" width="20" height="17" viewBox="0 0 20 17"><path d="M2 2 H15 Q18 2 18 5 V12 L14 16 H4 Q2 16 2 14Z" fill="#f4edf2" stroke="#d6c6d0" stroke-width="0.8"/><path d="M10 14 L17 7" stroke="#bba" stroke-width="1.4"/></svg>
<div class="t" style="transform:scaleX(0.849);left:616px;top:142.12px;font-size:7.5px;color:#c0c0c0;">Експрес</div>
<div class="t" style="transform:scaleX(0.775);left:619.5px;top:149.22px;font-size:7.5px;color:#c0c0c0;">стилі</div>
<svg class="a" style="left:635.5px;top:151.5px;" width="4.9" height="3" viewBox="0 0 4.9 3"><path d="M0.2 0.3 H4.4 L2.20 2.6Z" fill="#c8c8c8"/></svg>
<svg class="a" style="left:646px;top:126px;" width="10" height="29" viewBox="0 0 10 29"><path d="M2 6 L5 2.5 L8 6 L5 9Z" fill="none" stroke="#c4c4c4" stroke-width="0.9"/><path d="M1.5 19 L8 13" stroke="#c4c4c4" stroke-width="1.2"/><rect x="1" y="14" width="7" height="6" fill="none" stroke="#d2d2d2" stroke-width="0.7"/><ellipse cx="5" cy="26" rx="4" ry="2.5" fill="#eee" stroke="#c8c8c8" stroke-width="0.8"/></svg>
<div class="t" style="transform:scaleX(0.859);left:656.5px;top:127.03px;font-size:7.5px;color:#c4c4c4;">Заливка фігури</div>
<svg class="a" style="left:706px;top:129.29999999999998px;" width="4.9" height="3" viewBox="0 0 4.9 3"><path d="M0.2 0.3 H4.4 L2.20 2.6Z" fill="#ccc"/></svg>
<div class="t" style="transform:scaleX(0.852);left:656.5px;top:137.22px;font-size:7.5px;color:#c4c4c4;">Контур фігури</div>
<svg class="a" style="left:701px;top:139.5px;" width="4.9" height="3" viewBox="0 0 4.9 3"><path d="M0.2 0.3 H4.4 L2.20 2.6Z" fill="#ccc"/></svg>
<div class="t" style="transform:scaleX(0.810);left:656.5px;top:148.03px;font-size:7.5px;color:#c4c4c4;">Ефекти для фігур</div>
<svg class="a" style="left:710px;top:150.29999999999998px;" width="4.9" height="3" viewBox="0 0 4.9 3"><path d="M0.2 0.3 H4.4 L2.20 2.6Z" fill="#ccc"/></svg>
<svg class="a" style="left:729px;top:125px;" width="11" height="30" viewBox="0 0 11 30"><circle cx="6" cy="4" r="2.8" fill="none" stroke="#2b62c4" stroke-width="1.1"/><path d="M4 6 L1.2 8.8" stroke="#2b62c4" stroke-width="1.3"/><path d="M2 14 H7 M1 16 H6" stroke="#8a4a9a" stroke-width="0.9"/><path d="M2 18 H8" stroke="#2b62c4" stroke-width="0.9"/><path d="M3 22 V29 L5 27.5 L7 29.5" fill="none" stroke="#777" stroke-width="0.8"/></svg>
<div class="t" style="transform:scaleX(0.798);left:741px;top:126.20px;font-size:8px;color:#333;">Знайти</div>
<div class="t" style="transform:scaleX(0.849);left:740.5px;top:136.90px;font-size:8px;color:#333;">Замінити</div>
<svg class="a" style="left:777.5px;top:139.39999999999998px;" width="4.9" height="3" viewBox="0 0 4.9 3"><path d="M0.2 0.3 H4.4 L2.20 2.6Z" fill="#666"/></svg>
<div class="t" style="transform:scaleX(0.775);left:741px;top:147.40px;font-size:8px;color:#333;">Виділити</div>
<svg class="a" style="left:769.5px;top:149.89999999999998px;" width="4.9" height="3" viewBox="0 0 4.9 3"><path d="M0.2 0.3 H4.4 L2.20 2.6Z" fill="#666"/></svg>
<svg class="a" style="left:806px;top:126px;" width="17" height="16" viewBox="0 0 17 16"><path d="M1.5 1 H10 L14 5 V14.5 H1.5Z" fill="#f4f6fb" stroke="#5d87c9" stroke-width="0.9"/><path d="M4 11 Q6 6 7 3 Q8 7 11 9 Q7 9 4 11Z" fill="none" stroke="#5d87c9" stroke-width="0.8"/><path d="M9 14 L15 9" stroke="#5d87c9" stroke-width="1.6"/></svg>
<div class="t" style="transform:scaleX(0.826);left:798px;top:141.70px;font-size:8px;color:#333;">Створити</div>
<div class="t" style="transform:scaleX(0.772);left:797.5px;top:149.00px;font-size:8px;color:#333;">PDF-файл</div>
<div class="a" style="left:854.5px;top:130.5px;width:5px;height:5px;border-radius:50%;background:#f28c1e"></div>
<div class="t" style="transform:scaleX(0.820);left:840.5px;top:141.70px;font-size:8px;color:#333;">Надбудови</div>
<div class="a" style="left:0px;top:485.5px;width:968px;height:36.2px;background:#000;"></div>
<div class="a" style="left:0px;top:521.7px;width:968px;height:1.3px;background:#3a3a3c;"></div>
<svg class="a" style="left:-1px;top:495px;" width="6" height="11" viewBox="0 0 6 11"><path d="M0 3.2 L3.6 1 V9.5 L0 7.3" fill="none" stroke="#eee" stroke-width="1.1"/></svg>
<svg class="a" style="left:18.5px;top:497.5px;" width="8" height="5" viewBox="0 0 8 5"><path d="M1 4 L4 1 L7 4" fill="none" stroke="#e0e0e0" stroke-width="1.2"/></svg>
<div class="t" style="transform:scaleX(0.827);left:-1.5px;top:511.24px;font-size:8.8px;color:#f2f2f2;font-weight:bold;">ео</div>
<svg class="a" style="left:294.5px;top:494.5px;" width="15" height="12" viewBox="0 0 15 12"><circle cx="4.5" cy="3" r="2.3" fill="none" stroke="#eee" stroke-width="1.1"/><circle cx="10.5" cy="5.2" r="2.3" fill="none" stroke="#eee" stroke-width="1.1"/><path d="M1 10 Q1 6.5 4.5 6.5 Q6 6.5 6.7 7.2" fill="none" stroke="#eee" stroke-width="1.1"/><path d="M6.5 11.3 Q6.5 8.5 10.5 8.5 Q14.3 8.5 14.3 11.3Z" fill="none" stroke="#eee" stroke-width="1.1"/></svg>
<div class="t" style="transform:scaleX(1.056);left:315px;top:494.98px;font-size:8.5px;color:#bdbdbd;font-weight:bold;">68</div>
<svg class="a" style="left:339.5px;top:497px;" width="8" height="5" viewBox="0 0 8 5"><path d="M1 4 L4 1 L7 4" fill="none" stroke="#e0e0e0" stroke-width="1.2"/></svg>
<div class="t" style="transform:scaleX(1.028);left:278.5px;top:511.24px;font-size:8.8px;color:#f2f2f2;font-weight:bold;">Участники</div>
<svg class="a" style="left:378px;top:492.5px;" width="18" height="14" viewBox="0 0 18 14"><path d="M6 2.5 Q6 0.7 8 0.7 H15 Q17 0.7 17 2.7 V7 Q17 8.5 15.5 8.8" fill="none" stroke="#eee" stroke-width="1.1"/><path d="M3 3.5 H11.5 Q14 3.5 14 6 V9.5 Q14 12 11.5 12 H5 L2.5 13.5 L3 12 Q1 11.8 1 9.5 V6 Q1 3.5 3 3.5Z" fill="#000" stroke="#eee" stroke-width="1.1"/><circle cx="4.8" cy="7.8" r="0.8" fill="#eee"/><circle cx="7.5" cy="7.8" r="0.8" fill="#eee"/><circle cx="10.2" cy="7.8" r="0.8" fill="#eee"/></svg>
<svg class="a" style="left:409.5px;top:497px;" width="8" height="5" viewBox="0 0 8 5"><path d="M1 4 L4 1 L7 4" fill="none" stroke="#e0e0e0" stroke-width="1.2"/></svg>
<div class="t" style="transform:scaleX(0.975);left:380.3px;top:511.24px;font-size:8.8px;color:#f2f2f2;font-weight:bold;">Чат</div>
<svg class="a" style="left:451px;top:493px;" width="16" height="14" viewBox="0 0 16 14"><path d="M3.5 8 V3.5 Q3.5 2.3 4.6 2.3 Q5.7 2.3 5.7 3.5 V2 Q5.7 0.8 6.8 0.8 Q7.9 0.8 7.9 2 V2.3 Q7.9 1.2 9 1.2 Q10.1 1.2 10.1 2.3 V3.5 Q10.1 2.5 11.2 2.5 Q12.3 2.5 12.3 3.6 V8 L13.5 6.5 Q14.5 5.8 15 6.8 L12 11.5 Q10.5 13.2 8 13.2 Q3.5 13.2 3.5 9Z" fill="none" stroke="#eee" stroke-width="1.1"/><path d="M5.7 3.5V7M7.9 2.3V7M10.1 3.5V7" stroke="#eee" stroke-width="0.9"/></svg>
<svg class="a" style="left:482.5px;top:497px;" width="8" height="5" viewBox="0 0 8 5"><path d="M1 4 L4 1 L7 4" fill="none" stroke="#e0e0e0" stroke-width="1.2"/></svg>
<div class="t" style="transform:scaleX(1.008);left:430px;top:511.24px;font-size:8.8px;color:#f2f2f2;font-weight:bold;">Поднять руку</div>
<div class="a" style="left:525px;top:493.9px;width:18.7px;height:11.5px;background:#23d18b;border-radius:2px"></div>
<svg class="a" style="left:529.5px;top:494.5px;" width="10" height="10" viewBox="0 0 10 10"><path d="M5 9 V2.5 M1.8 5.5 L5 2 L8.2 5.5" fill="none" stroke="#000" stroke-width="1.6"/></svg>
<div class="t" style="transform:scaleX(0.977);left:508.6px;top:511.24px;font-size:8.8px;color:#f2f2f2;font-weight:bold;">Поделиться</div>
<svg class="a" style="left:598.5px;top:492.5px;" width="18" height="15" viewBox="0 0 18 15"><path d="M1 5 V3 Q1 1 3 1 H5 M13 1 H15 Q17 1 17 3 V5 M1 10 V12 Q1 14 3 14 H5 M13 14 H15 Q17 14 17 12 V10" fill="none" stroke="#eee" stroke-width="1.1"/><circle cx="12.5" cy="4.5" r="2" fill="none" stroke="#eee" stroke-width="1.1"/><circle cx="5.5" cy="10.5" r="2" fill="none" stroke="#eee" stroke-width="1.1"/></svg>
<div class="t" style="transform:scaleX(1.047);left:578.7px;top:511.24px;font-size:8.8px;color:#f2f2f2;font-weight:bold;">Приложения</div>
<svg class="a" style="left:664.5px;top:491.5px;" width="17" height="17" viewBox="0 0 17 17"><circle cx="8.5" cy="8.5" r="7.2" fill="none" stroke="#eee" stroke-width="1.3"/><circle cx="8.5" cy="8.5" r="3.6" fill="#fff"/></svg>
<div class="t" style="transform:scaleX(0.961);left:657.8px;top:511.24px;font-size:8.8px;color:#f2f2f2;font-weight:bold;">Запись</div>
<svg class="a" style="left:737px;top:491.5px;" width="18" height="17" viewBox="0 0 18 17"><circle cx="9" cy="8.5" r="7.3" fill="none" stroke="#eee" stroke-width="1.3"/><circle cx="5.6" cy="8.5" r="1.1" fill="#eee"/><circle cx="9" cy="8.5" r="1.1" fill="#eee"/><circle cx="12.4" cy="8.5" r="1.1" fill="#eee"/></svg>
<div class="t" style="transform:scaleX(0.994);left:711px;top:511.24px;font-size:8.8px;color:#f2f2f2;font-weight:bold;">Дополнительно</div>
<div class="a" style="left:185px;top:165px;width:1px;height:290px;background:#d5d5d5;"></div>
<div class="a" style="left:175.2px;top:166.3px;width:8.6px;height:287px;background:#ededed;"></div>
<div class="a" style="left:175.2px;top:166.3px;width:8.6px;height:6.7px;background:#fbfbfb;"></div>
<svg class="a" style="left:177.2px;top:168.3px;" width="5" height="3" viewBox="0 0 5 3"><path d="M0.3 2.6 L2.3 0.3 L4.3 2.6Z" fill="#111"/></svg>
<div class="a" style="left:175.4px;top:173.3px;width:8.2px;height:64.4px;background:#ffffff;border:0.5px solid #dcdcdc"></div>
<div class="a" style="left:175.2px;top:446.6px;width:8.6px;height:6.7px;background:#fbfbfb;"></div>
<svg class="a" style="left:177.2px;top:448.8px;" width="5" height="3" viewBox="0 0 5 3"><path d="M0.3 0.3 L2.3 2.6 L4.3 0.3Z" fill="#111"/></svg>
<div class="t" style="transform:scaleX(1.011);left:57.5px;top:173.90px;font-size:8px;color:#c4431f;">1</div>
<div class="t" style="transform:scaleX(1.011);left:57.5px;top:239.40px;font-size:8px;color:#707070;">2</div>
<div class="t" style="transform:scaleX(1.011);left:57.5px;top:304.40px;font-size:8px;color:#707070;">3</div>
<div class="t" style="transform:scaleX(1.011);left:57.5px;top:370.40px;font-size:8px;color:#707070;">4</div>
<div class="t" style="transform:scaleX(1.011);left:57.5px;top:436.40px;font-size:8px;color:#707070;">5</div>
<div class="a" style="left:189.3px;top:180px;width:7px;height:251px;background:#fff"></div>
<svg class="a" style="left:189.3px;top:180px;" width="7" height="251" viewBox="0 0 7 251"><text x="0" y="0" transform="translate(5.3,243.0) rotate(-90)" font-size="6" fill="#333" text-anchor="middle" font-family="Liberation Sans">9</text><circle cx="3.5" cy="246.2" r="0.35" fill="#888"/><path d="M2.3 249.5H4.7" stroke="#777" stroke-width="0.5"/><text x="0" y="0" transform="translate(5.3,230.0) rotate(-90)" font-size="6" fill="#333" text-anchor="middle" font-family="Liberation Sans">8</text><circle cx="3.5" cy="233.2" r="0.35" fill="#888"/><path d="M2.3 236.5H4.7" stroke="#777" stroke-width="0.5"/><circle cx="3.5" cy="239.8" r="0.35" fill="#888"/><text x="0" y="0" transform="translate(5.3,217.0) rotate(-90)" font-size="6" fill="#333" text-anchor="middle" font-family="Liberation Sans">7</text><circle cx="3.5" cy="220.2" r="0.35" fill="#888"/><path d="M2.3 223.5H4.7" stroke="#777" stroke-width="0.5"/><circle cx="3.5" cy="226.8" r="0.35" fill="#888"/><text x="0" y="0" transform="translate(5.3,204.0) rotate(-90)" font-size="6" fill="#333" text-anchor="middle" font-family="Liberation Sans">6</text><circle cx="3.5" cy="207.2" r="0.35" fill="#888"/><path d="M2.3 210.5H4.7" stroke="#777" stroke-width="0.5"/><circle cx="3.5" cy="213.8" r="0.35" fill="#888"/><text x="0" y="0" transform="translate(5.3,191.0) rotate(-90)" font-size="6" fill="#333" text-anchor="middle" font-family="Liberation Sans">5</text><circle cx="3.5" cy="194.2" r="0.35" fill="#888"/><path d="M2.3 197.5H4.7" stroke="#777" stroke-width="0.5"/><circle cx="3.5" cy="200.8" r="0.35" fill="#888"/><text x="0" y="0" transform="translate(5.3,178.0) rotate(-90)" font-size="6" fill="#333" text-anchor="middle" font-family="Liberation Sans">4</text><circle cx="3.5" cy="181.2" r="0.35" fill="#888"/><path d="M2.3 184.5H4.7" stroke="#777" stroke-width="0.5"/><circle cx="3.5" cy="187.8" r="0.35" fill="#888"/><text x="0" y="0" transform="translate(5.3,165.0) rotate(-90)" font-size="6" fill="#333" text-anchor="middle" font-family="Liberation Sans">3</text><circle cx="3.5" cy="168.2" r="0.35" fill="#888"/><path d="M2.3 171.5H4.7" stroke="#777" stroke-width="0.5"/><circle cx="3.5" cy="174.8" r="0.35" fill="#888"/><text x="0" y="0" transform="translate(5.3,152.0) rotate(-90)" font-size="6" fill="#333" text-anchor="middle" font-family="Liberation Sans">2</text><circle cx="3.5" cy="155.2" r="0.35" fill="#888"/><path d="M2.3 158.5H4.7" stroke="#777" stroke-width="0.5"/><circle cx="3.5" cy="161.8" r="0.35" fill="#888"/><text x="0" y="0" transform="translate(5.3,139.0) rotate(-90)" font-size="6" fill="#333" text-anchor="middle" font-family="Liberation Sans">1</text><circle cx="3.5" cy="142.2" r="0.35" fill="#888"/><path d="M2.3 145.5H4.7" stroke="#777" stroke-width="0.5"/><circle cx="3.5" cy="148.8" r="0.35" fill="#888"/><text x="0" y="0" transform="translate(5.3,126.0) rotate(-90)" font-size="6" fill="#333" text-anchor="middle" font-family="Liberation Sans">0</text><circle cx="3.5" cy="129.2" r="0.35" fill="#888"/><path d="M2.3 132.5H4.7" stroke="#777" stroke-width="0.5"/><circle cx="3.5" cy="135.8" r="0.35" fill="#888"/><text x="0" y="0" transform="translate(5.3,113.0) rotate(-90)" font-size="6" fill="#333" text-anchor="middle" font-family="Liberation Sans">1</text><circle cx="3.5" cy="116.2" r="0.35" fill="#888"/><path d="M2.3 119.5H4.7" stroke="#777" stroke-width="0.5"/><circle cx="3.5" cy="122.8" r="0.35" fill="#888"/><text x="0" y="0" transform="translate(5.3,100.0) rotate(-90)" font-size="6" fill="#333" text-anchor="middle" font-family="Liberation Sans">2</text><circle cx="3.5" cy="103.2" r="0.35" fill="#888"/><path d="M2.3 106.5H4.7" stroke="#777" stroke-width="0.5"/><circle cx="3.5" cy="109.8" r="0.35" fill="#888"/><text x="0" y="0" transform="translate(5.3,87.0) rotate(-90)" font-size="6" fill="#333" text-anchor="middle" font-family="Liberation Sans">3</text><circle cx="3.5" cy="90.2" r="0.35" fill="#888"/><path d="M2.3 93.5H4.7" stroke="#777" stroke-width="0.5"/><circle cx="3.5" cy="96.8" r="0.35" fill="#888"/><text x="0" y="0" transform="translate(5.3,74.0) rotate(-90)" font-size="6" fill="#333" text-anchor="middle" font-family="Liberation Sans">4</text><circle cx="3.5" cy="77.2" r="0.35" fill="#888"/><path d="M2.3 80.5H4.7" stroke="#777" stroke-width="0.5"/><circle cx="3.5" cy="83.8" r="0.35" fill="#888"/><text x="0" y="0" transform="translate(5.3,61.0) rotate(-90)" font-size="6" fill="#333" text-anchor="middle" font-family="Liberation Sans">5</text><circle cx="3.5" cy="64.2" r="0.35" fill="#888"/><path d="M2.3 67.5H4.7" stroke="#777" stroke-width="0.5"/><circle cx="3.5" cy="70.8" r="0.35" fill="#888"/><text x="0" y="0" transform="translate(5.3,48.0) rotate(-90)" font-size="6" fill="#333" text-anchor="middle" font-family="Liberation Sans">6</text><circle cx="3.5" cy="51.2" r="0.35" fill="#888"/><path d="M2.3 54.5H4.7" stroke="#777" stroke-width="0.5"/><circle cx="3.5" cy="57.8" r="0.35" fill="#888"/><text x="0" y="0" transform="translate(5.3,35.0) rotate(-90)" font-size="6" fill="#333" text-anchor="middle" font-family="Liberation Sans">7</text><circle cx="3.5" cy="38.2" r="0.35" fill="#888"/><path d="M2.3 41.5H4.7" stroke="#777" stroke-width="0.5"/><circle cx="3.5" cy="44.8" r="0.35" fill="#888"/><text x="0" y="0" transform="translate(5.3,22.0) rotate(-90)" font-size="6" fill="#333" text-anchor="middle" font-family="Liberation Sans">8</text><circle cx="3.5" cy="25.2" r="0.35" fill="#888"/><path d="M2.3 28.5H4.7" stroke="#777" stroke-width="0.5"/><circle cx="3.5" cy="31.8" r="0.35" fill="#888"/><text x="0" y="0" transform="translate(5.3,9.0) rotate(-90)" font-size="6" fill="#333" text-anchor="middle" font-family="Liberation Sans">9</text><circle cx="3.5" cy="12.2" r="0.35" fill="#888"/><path d="M2.3 15.5H4.7" stroke="#777" stroke-width="0.5"/><circle cx="3.5" cy="18.8" r="0.35" fill="#888"/><path d="M2.3 2.5H4.7" stroke="#777" stroke-width="0.5"/><circle cx="3.5" cy="5.8" r="0.35" fill="#888"/></svg>
<svg class="a" style="left:344.7px;top:167.1px;" width="407.3" height="6.7" viewBox="0 0 407.3 6.7"><rect width="407.3" height="6.7" fill="#fff"/><text x="11.3" y="5.6" font-size="6" fill="#333" text-anchor="middle" font-family="Liberation Sans">12</text><circle cx="15.3" cy="3.4" r="0.35" fill="#888"/><path d="M19.3 2.2V4.5" stroke="#777" stroke-width="0.5"/><circle cx="23.3" cy="3.4" r="0.35" fill="#888"/><text x="27.3" y="5.6" font-size="6" fill="#333" text-anchor="middle" font-family="Liberation Sans">11</text><circle cx="31.3" cy="3.4" r="0.35" fill="#888"/><path d="M35.3 2.2V4.5" stroke="#777" stroke-width="0.5"/><circle cx="39.3" cy="3.4" r="0.35" fill="#888"/><text x="43.3" y="5.6" font-size="6" fill="#333" text-anchor="middle" font-family="Liberation Sans">10</text><circle cx="47.3" cy="3.4" r="0.35" fill="#888"/><path d="M51.3 2.2V4.5" stroke="#777" stroke-width="0.5"/><circle cx="55.3" cy="3.4" r="0.35" fill="#888"/><text x="59.3" y="5.6" font-size="6" fill="#333" text-anchor="middle" font-family="Liberation Sans">9</text><circle cx="63.3" cy="3.4" r="0.35" fill="#888"/><path d="M67.3 2.2V4.5" stroke="#777" stroke-width="0.5"/><circle cx="71.3" cy="3.4" r="0.35" fill="#888"/><text x="75.3" y="5.6" font-size="6" fill="#333" text-anchor="middle" font-family="Liberation Sans">8</text><circle cx="79.3" cy="3.4" r="0.35" fill="#888"/><path d="M83.3 2.2V4.5" stroke="#777" stroke-width="0.5"/><circle cx="87.3" cy="3.4" r="0.35" fill="#888"/><text x="91.3" y="5.6" font-size="6" fill="#333" text-anchor="middle" font-family="Liberation Sans">7</text><circle cx="95.3" cy="3.4" r="0.35" fill="#888"/><path d="M99.3 2.2V4.5" stroke="#777" stroke-width="0.5"/><circle cx="103.3" cy="3.4" r="0.35" fill="#888"/><text x="107.3" y="5.6" font-size="6" fill="#333" text-anchor="middle" font-family="Liberation Sans">6</text><circle cx="111.3" cy="3.4" r="0.35" fill="#888"/><path d="M115.3 2.2V4.5" stroke="#777" stroke-width="0.5"/><circle cx="119.3" cy="3.4" r="0.35" fill="#888"/><text x="123.3" y="5.6" font-size="6" fill="#333" text-anchor="middle" font-family="Liberation Sans">5</text><circle cx="127.3" cy="3.4" r="0.35" fill="#888"/><path d="M131.3 2.2V4.5" stroke="#777" stroke-width="0.5"/><circle cx="135.3" cy="3.4" r="0.35" fill="#888"/><text x="139.3" y="5.6" font-size="6" fill="#333" text-anchor="middle" font-family="Liberation Sans">4</text><circle cx="143.3" cy="3.4" r="0.35" fill="#888"/><path d="M147.3 2.2V4.5" stroke="#777" stroke-width="0.5"/><circle cx="151.3" cy="3.4" r="0.35" fill="#888"/><text x="155.3" y="5.6" font-size="6" fill="#333" text-anchor="middle" font-family="Liberation Sans">3</text><circle cx="159.3" cy="3.4" r="0.35" fill="#888"/><path d="M163.3 2.2V4.5" stroke="#777" stroke-width="0.5"/><circle cx="167.3" cy="3.4" r="0.35" fill="#888"/><text x="171.3" y="5.6" font-size="6" fill="#333" text-anchor="middle" font-family="Liberation Sans">2</text><circle cx="175.3" cy="3.4" r="0.35" fill="#888"/><path d="M179.3 2.2V4.5" stroke="#777" stroke-width="0.5"/><circle cx="183.3" cy="3.4" r="0.35" fill="#888"/><text x="187.3" y="5.6" font-size="6" fill="#333" text-anchor="middle" font-family="Liberation Sans">1</text><circle cx="191.3" cy="3.4" r="0.35" fill="#888"/><path d="M195.3 2.2V4.5" stroke="#777" stroke-width="0.5"/><circle cx="199.3" cy="3.4" r="0.35" fill="#888"/><text x="203.3" y="5.6" font-size="6" fill="#333" text-anchor="middle" font-family="Liberation Sans">0</text><circle cx="207.3" cy="3.4" r="0.35" fill="#888"/><path d="M211.3 2.2V4.5" stroke="#777" stroke-width="0.5"/><circle cx="215.3" cy="3.4" r="0.35" fill="#888"/><text x="219.3" y="5.6" font-size="6" fill="#333" text-anchor="middle" font-family="Liberation Sans">1</text><circle cx="223.3" cy="3.4" r="0.35" fill="#888"/><path d="M227.3 2.2V4.5" stroke="#777" stroke-width="0.5"/><circle cx="231.3" cy="3.4" r="0.35" fill="#888"/><text x="235.3" y="5.6" font-size="6" fill="#333" text-anchor="middle" font-family="Liberation Sans">2</text><circle cx="239.3" cy="3.4" r="0.35" fill="#888"/><path d="M243.3 2.2V4.5" stroke="#777" stroke-width="0.5"/><circle cx="247.3" cy="3.4" r="0.35" fill="#888"/><text x="251.3" y="5.6" font-size="6" fill="#333" text-anchor="middle" font-family="Liberation Sans">3</text><circle cx="255.3" cy="3.4" r="0.35" fill="#888"/><path d="M259.3 2.2V4.5" stroke="#777" stroke-width="0.5"/><circle cx="263.3" cy="3.4" r="0.35" fill="#888"/><text x="267.3" y="5.6" font-size="6" fill="#333" text-anchor="middle" font-family="Liberation Sans">4</text><circle cx="271.3" cy="3.4" r="0.35" fill="#888"/><path d="M275.3 2.2V4.5" stroke="#777" stroke-width="0.5"/><circle cx="279.3" cy="3.4" r="0.35" fill="#888"/><text x="283.3" y="5.6" font-size="6" fill="#333" text-anchor="middle" font-family="Liberation Sans">5</text><circle cx="287.3" cy="3.4" r="0.35" fill="#888"/><path d="M291.3 2.2V4.5" stroke="#777" stroke-width="0.5"/><circle cx="295.3" cy="3.4" r="0.35" fill="#888"/><text x="299.3" y="5.6" font-size="6" fill="#333" text-anchor="middle" font-family="Liberation Sans">6</text><circle cx="303.3" cy="3.4" r="0.35" fill="#888"/><path d="M307.3 2.2V4.5" stroke="#777" stroke-width="0.5"/><circle cx="311.3" cy="3.4" r="0.35" fill="#888"/><text x="315.3" y="5.6" font-size="6" fill="#333" text-anchor="middle" font-family="Liberation Sans">7</text><circle cx="319.3" cy="3.4" r="0.35" fill="#888"/><path d="M323.3 2.2V4.5" stroke="#777" stroke-width="0.5"/><circle cx="327.3" cy="3.4" r="0.35" fill="#888"/><text x="331.3" y="5.6" font-size="6" fill="#333" text-anchor="middle" font-family="Liberation Sans">8</text><circle cx="335.3" cy="3.4" r="0.35" fill="#888"/><path d="M339.3 2.2V4.5" stroke="#777" stroke-width="0.5"/><circle cx="343.3" cy="3.4" r="0.35" fill="#888"/><text x="347.3" y="5.6" font-size="6" fill="#333" text-anchor="middle" font-family="Liberation Sans">9</text><circle cx="351.3" cy="3.4" r="0.35" fill="#888"/><path d="M355.3 2.2V4.5" stroke="#777" stroke-width="0.5"/><circle cx="359.3" cy="3.4" r="0.35" fill="#888"/><text x="363.3" y="5.6" font-size="6" fill="#333" text-anchor="middle" font-family="Liberation Sans">10</text><circle cx="367.3" cy="3.4" r="0.35" fill="#888"/><path d="M371.3 2.2V4.5" stroke="#777" stroke-width="0.5"/><circle cx="375.3" cy="3.4" r="0.35" fill="#888"/><text x="379.3" y="5.6" font-size="6" fill="#333" text-anchor="middle" font-family="Liberation Sans">11</text><circle cx="383.3" cy="3.4" r="0.35" fill="#888"/><path d="M387.3 2.2V4.5" stroke="#777" stroke-width="0.5"/><circle cx="391.3" cy="3.4" r="0.35" fill="#888"/><text x="395.3" y="5.6" font-size="6" fill="#333" text-anchor="middle" font-family="Liberation Sans">12</text><circle cx="399.3" cy="3.4" r="0.35" fill="#888"/><path d="M403.3 2.2V4.5" stroke="#777" stroke-width="0.5"/></svg>
<div class="a" style="left:895.7px;top:166.3px;width:8.2px;height:264.7px;background:#efefef;"></div>
<div class="a" style="left:895.7px;top:166.8px;width:8.2px;height:5.9px;background:#fbfbfb;"></div>
<svg class="a" style="left:897.7px;top:168.4px;" width="5" height="3" viewBox="0 0 5 3"><path d="M0.3 2.6 L2.3 0.3 L4.3 2.6Z" fill="#111"/></svg>
<div class="a" style="left:895.9px;top:173.6px;width:7.8px;height:11.6px;background:#ffffff;border:0.5px solid #dcdcdc"></div>
<div class="a" style="left:895.7px;top:407px;width:8.2px;height:5.6px;background:#fbfbfb;"></div>
<svg class="a" style="left:897.7px;top:408.6px;" width="5" height="3" viewBox="0 0 5 3"><path d="M0.3 0.3 L2.3 2.6 L4.3 0.3Z" fill="#111"/></svg>
<svg class="a" style="left:896.5px;top:413px;" width="7" height="17" viewBox="0 0 7 17"><path d="M1.2 4.5 L3.5 2 L5.8 4.5M1.2 7 L3.5 4.5 L5.8 7" fill="none" stroke="#444" stroke-width="0.9"/><path d="M1.2 10.5 L3.5 13 L5.8 10.5M1.2 13 L3.5 15.5 L5.8 13" fill="none" stroke="#444" stroke-width="0.9"/></svg>
<div class="a" style="left:186px;top:437.7px;width:709.7px;height:1px;background:#d2d2d2;"></div>
<div class="a" style="left:895.7px;top:431px;width:8.2px;height:6.7px;background:#e6e6e6;"></div>
<div class="t" style="transform:scaleX(0.885);left:192.2px;top:441.35px;font-size:9px;color:#6a6a6a;">Нотатки до слайда</div>
<!--SLIDE-->
<div class="a" style="left:343px;top:181px;width:409px;height:250px;overflow:hidden;background:linear-gradient(180deg,#f6f7fb 0%,#e2e8f2 32%,#c8d6ea 65%,#b4c8e3 100%)">
<svg class="a" style="left:172px;top:4px;" width="75" height="68" viewBox="0 0 75 68"><path d="M11 11 Q14 8.5 18 8 L21 10 L20.5 56 Q14 55 11.5 54.5 Q9 42 9.2 26 Q9.5 16 11 11Z" fill="#f59a2d"/><path d="M5.2 11.5 L7.6 11 L9.8 30 L7.2 30.5Z" fill="#f59a2d"/><circle cx="26.7" cy="10.8" r="6" fill="#fbfbfd" stroke="#f59a2d" stroke-width="1.5"/><path d="M31 12.5 Q46 11 62 13.5 L58.5 17.5 Q46 16 31.5 18.8Z" fill="#f59a2d"/><circle cx="26.7" cy="13.6" r="3.4" fill="#4b4b4d"/><path d="M19 17.5 Q26.5 15.5 32.5 17.5 L32.5 57 L27.5 57 L26 50 L23 57 L18.5 57 Q17.5 42 18.8 32 L9.5 32.5 L7.2 29.5 L17.5 27.5 Q17.5 21 19 17.5Z" fill="#4b4b4d"/><path d="M20 20 L22.5 19 L23 44 L21 45Z" fill="#f59a2d" opacity="0.9"/><path d="M12.5 59.5 Q30 56 50 60 Q30 58.5 12.5 61.5Z" fill="#4b4b4d"/><path d="M24.9 17.4 H56 V40 Q56 50.5 40.4 54.7 Q24.9 50.5 24.9 40Z" fill="#4b4b4d"/><path d="M26.5 19 H54.4 V40 Q54.4 49.3 40.4 53 Q26.5 49.3 26.5 40Z" fill="#fff"/><path d="M27.6 20.1 H53.3 V40 Q53.3 48.5 40.4 52 Q27.6 48.5 27.6 40Z" fill="#f59a2d"/><path d="M28.8 21.3 H52.1 V40 Q52.1 47.6 40.4 50.9 Q28.8 47.6 28.8 40Z" fill="#4b4b4d"/><path d="M29.9 22.4 H51 V40.5 Q45 38.5 40.4 41.5 Q35.8 38.5 29.9 40.5Z" fill="#fff"/><path d="M29.9 39.5 Q35.8 37.5 40.4 40.5 Q45 37.5 51 39.5 V41.8 Q45 40 40.4 43 Q35.8 40 29.9 41.8Z" fill="#f59a2d"/><path d="M32.2 25 V38.5" stroke="#4b4b4d" stroke-width="2.2"/><path d="M42 25.2 H36.3 V38.3 H38.8 Q42.3 38.3 42.3 34.8 Q42.3 31.3 38.8 31.3 H36.3" fill="none" stroke="#4b4b4d" stroke-width="2"/><path d="M44 25 L50.5 38.5 M50.5 25 L44 38.5" stroke="#4b4b4d" stroke-width="2"/><path d="M40.4 42.5 V50 M35.5 45.5 L45.3 47.5 M45.3 45 L35.5 48 M37 43.5 L43.8 49.5 M43.8 43.5 L37 49.5" stroke="#f59a2d" stroke-width="1.1"/><path d="M56.5 19 Q70 33 62 55" fill="none" stroke="#4b4b4d" stroke-width="0.9"/><ellipse cx="58.0" cy="20.5" rx="2.9" ry="1.5" transform="rotate(40 58.0 20.5)" fill="#4b4b4d"/><ellipse cx="61.5" cy="22.5" rx="2.9" ry="1.5" transform="rotate(-50 61.5 22.5)" fill="#4b4b4d"/><ellipse cx="61.0" cy="26.0" rx="2.9" ry="1.5" transform="rotate(60 61.0 26.0)" fill="#4b4b4d"/><ellipse cx="65.0" cy="28.0" rx="2.9" ry="1.5" transform="rotate(-45 65.0 28.0)" fill="#4b4b4d"/><ellipse cx="63.0" cy="31.5" rx="2.9" ry="1.5" transform="rotate(75 63.0 31.5)" fill="#4b4b4d"/><ellipse cx="67.0" cy="33.5" rx="2.9" ry="1.5" transform="rotate(-70 67.0 33.5)" fill="#4b4b4d"/><ellipse cx="63.8" cy="37.0" rx="2.9" ry="1.5" transform="rotate(85 63.8 37.0)" fill="#4b4b4d"/><ellipse cx="67.5" cy="39.0" rx="2.9" ry="1.5" transform="rotate(80 67.5 39.0)" fill="#4b4b4d"/><ellipse cx="63.0" cy="42.5" rx="2.9" ry="1.5" transform="rotate(100 63.0 42.5)" fill="#4b4b4d"/><ellipse cx="66.5" cy="44.5" rx="2.9" ry="1.5" transform="rotate(110 66.5 44.5)" fill="#4b4b4d"/><ellipse cx="61.5" cy="48.0" rx="2.9" ry="1.5" transform="rotate(115 61.5 48.0)" fill="#4b4b4d"/><path d="M52 45.5 Q60 43 68 44.5 L67 48 Q59 47 52 49Z" fill="#f59a2d"/><path d="M50 51 Q57 49 65 50 L64 53.5 Q57 53 49 55Z" fill="#f59a2d"/><path d="M47 56.5 Q54 55 61 56 L60 58.5 Q54 58 46 60Z" fill="#f59a2d"/><path d="M54 46.5 H64 M52 52 H61" stroke="#4b4b4d" stroke-width="0.6" stroke-dasharray="1 0.6"/></svg>
<div class="t" style="transform:scaleX(1.158);left:80.9px;top:69.48px;font-size:20.5px;color:#f6923c;font-weight:bold;">Інновації у створенні</div>
<div class="t" style="transform:scaleX(1.141);left:75.7px;top:94.68px;font-size:20.5px;color:#f6923c;font-weight:bold;">кровоспинних засобів</div>
<div class="a" style="left:81px;top:87.6px;width:106px;height:1px;background:rgba(226,112,120,0.75);"></div>
<div class="a" style="left:215px;top:87.6px;width:114px;height:1px;background:rgba(226,112,120,0.75);"></div>
<div class="a" style="left:76px;top:112.8px;width:166px;height:1px;background:rgba(226,112,120,0.75);"></div>
<div class="a" style="left:250px;top:112.8px;width:84px;height:1px;background:rgba(226,112,120,0.75);"></div>
<div class="t" style="transform:scaleX(1.050);left:137.9px;top:133.08px;font-size:10.5px;color:#404040;font-weight:bold;">Володимир Чернишенко</div>
<div class="t" style="transform:scaleX(1.070);left:162.5px;top:145.18px;font-size:10.5px;color:#404040;font-weight:bold;">докт. біол. наук</div>
<div class="t" style="transform:scaleX(1.032);left:72.8px;top:157.78px;font-size:10.5px;color:#404040;font-weight:bold;">Інституту біохімії ім. О.В. Палладіна НАН України</div>
<div class="t" style="transform:scaleX(1.029);left:134px;top:169.78px;font-size:10.5px;color:#404040;font-weight:bold;">bio.cherv@biochem.kiev.ua</div>
<div class="a" style="left:162.5px;top:155.7px;width:25px;height:0.9px;background:rgba(226,112,120,0.75);"></div>
<div class="a" style="left:192px;top:155.7px;width:25px;height:0.9px;background:rgba(226,112,120,0.75);"></div>
<div class="a" style="left:73px;top:167.6px;width:49px;height:0.9px;background:rgba(226,112,120,0.75);"></div>
<div class="a" style="left:126px;top:167.6px;width:41px;height:0.9px;background:rgba(226,112,120,0.75);"></div>
<div class="a" style="left:170px;top:167.6px;width:12px;height:0.9px;background:rgba(226,112,120,0.75);"></div>
<div class="a" style="left:212px;top:167.6px;width:55px;height:0.9px;background:rgba(226,112,120,0.75);"></div>
<div class="a" style="left:295px;top:167.6px;width:42px;height:0.9px;background:rgba(226,112,120,0.75);"></div>
<div class="a" style="left:9.4px;top:191.4px;width:85.4px;height:49.8px;overflow:hidden;background:#e4e4e4"><svg class="a" style="left:0;top:0;filter:blur(0.35px)" width="86" height="50" viewBox="0 0 86 50"><rect width="86" height="50" fill="#e2e2e2"/><rect x="0" y="0" width="86" height="12" fill="#ececec"/><path d="M30 0 V50 M44 0 V14 M60 0 V10" stroke="#bdbdbd" stroke-width="0.8"/><rect x="69" y="3" width="17" height="47" fill="#a8a8a8"/><rect x="70" y="8" width="4" height="12" fill="#3a3a3a"/><rect x="77" y="12" width="3" height="10" fill="#555"/><rect x="82" y="6" width="3" height="16" fill="#2e2e2e"/><rect x="69" y="24" width="17" height="3" fill="#ddd"/><rect x="70" y="29" width="15" height="10" fill="#3e3e3e"/><rect x="72" y="31" width="6" height="5" fill="#bbb"/><rect x="69" y="40" width="17" height="10" fill="#ececec"/><path d="M1 50 V32 Q1 30 5 30 L11 31 V50Z" fill="#2a2a2a"/><path d="M2 50 V24 Q3 16 12 15 L20 15 Q27 17 27 26 V50Z" fill="#c4c4c4"/><path d="M20 18 Q27 20 27 28 V50 H22Z" fill="#8e8e8e"/><path d="M23 24 L32 30 L30 42 L24 40Z" fill="#4a4a4a"/><ellipse cx="16" cy="9.5" rx="5" ry="6.5" fill="#d4d4d4"/><path d="M10.5 8 Q10 1.5 16 1.5 Q22 1.5 21.5 8 Q20 4.5 16 4.5 Q12 4.5 10.5 8Z" fill="#202020"/><path d="M12.5 14 Q16 19 19.5 14 L19 17.5 Q16 20 13 17.5Z" fill="#3a3a3a"/><path d="M13 9 H15.5 M17 9 H19.5" stroke="#444" stroke-width="1"/><path d="M30 50 V26 Q31 17 40 17 Q49 17 50 26 V50Z" fill="#f2f2f2"/><path d="M44 20 Q50 22 50 30 V50 H46Z" fill="#cfcfcf"/><ellipse cx="38" cy="12" rx="4.2" ry="5.5" fill="#d6d6d6"/><path d="M33 13 Q32 5 38.5 5 Q44 5 44 12 Q44 17 42 18 Q42 10 38 9.5 Q35 10 35 16Z" fill="#2a2a2a"/><path d="M36 12 H40" stroke="#555" stroke-width="0.8"/><path d="M49 50 V28 Q50 19 58 19 Q68 19 71 28 V50Z" fill="#f3f3f3"/><path d="M64 22 Q71 25 71 32 V50 H66Z" fill="#d2d2d2"/><ellipse cx="53.5" cy="16" rx="3.5" ry="5" fill="#dadada"/><path d="M50 12 Q51 5.5 57.5 6 Q65 6.5 65 14 Q65 20 60 21 Q58 14 54 11Z" fill="#1e1e1e"/><path d="M55 38 H70 V44 H55Z" fill="#404040"/><path d="M38 33 Q44 30 50 34 L48 38 Q43 36 38 37Z" fill="#d0d0d0"/><path d="M36 36 L44 40 L40 44Z" fill="#4a4a4a"/><circle cx="41" cy="27" r="1.2" fill="#3a3a3a"/></svg></div>
<div class="a" style="left:97.3px;top:191.4px;width:73.1px;height:49.8px;overflow:hidden;background:#a2a4a9"><svg class="a" style="left:0;top:0" width="74" height="50" viewBox="0 0 74 50"><rect width="74" height="50" fill="#a3a5aa"/><rect x="52" width="22" height="50" fill="#b6b8bd"/><rect x="0.5" y="0" width="2" height="50" fill="#4a4a4e"/><rect x="64" y="0" width="9" height="14" fill="#2f3446"/><path d="M8 50 L7 22 Q8 6 20 2 L58 0 Q66 6 66 24 L64 42 L54 50Z" fill="#857d64"/><path d="M12 10 Q20 6 24 14 Q18 18 12 10Z M40 4 Q50 2 52 10 Q44 14 40 4Z M46 22 Q56 18 60 28 Q52 32 46 22Z M20 34 Q28 30 32 38 Q24 42 20 34Z M52 36 Q60 34 62 42 Q56 46 52 36Z M30 16 Q36 12 40 20 Q34 24 30 16Z" fill="#5f5a46"/><path d="M26 6 Q32 4 34 10 Q28 12 26 6Z M50 14 Q56 12 58 18 Q52 20 50 14Z M12 28 Q18 26 20 32 Q14 34 12 28Z M36 40 Q42 38 44 44 Q38 46 36 40Z" fill="#aaa386"/><path d="M8 9 L14 6 L24 22 L20 26Z" fill="#2a2a28"/><path d="M18 24 L26 20 L42 48 L30 50Z" fill="#2c2b28"/><rect x="22" y="0" width="3.5" height="21" fill="#b9a56a"/><rect x="9" y="15" width="7" height="5" fill="#d8d03e"/><rect x="31" y="15" width="5" height="5" fill="#d63c3c"/><rect x="31" y="20" width="5" height="6" fill="#f0f0f0"/><path d="M18 22 Q24 18 30 22 Q31 28 24 30 Q18 29 18 22Z" fill="#c29a86"/><path d="M38 44 Q44 41 50 44 L48 49 L38 49Z" fill="#b48e7c"/></svg></div>
<div class="a" style="left:172.5px;top:191.4px;width:93.4px;height:49.8px;overflow:hidden;background:#d3d7da"><div class="a" style="left:16px;top:0px;width:52px;height:50px;background:linear-gradient(#dfe2e5,#d2d5d8 60%,#c6c9cc);border-radius:0;filter:blur(0.5px);"></div><div class="a" style="left:16px;top:8px;width:50px;height:3px;background:#f0f1f2;border-radius:0;filter:blur(0.5px);"></div><div class="a" style="left:0px;top:0px;width:17px;height:50px;background:linear-gradient(180deg,#8e7e60,#c2b28e 35%,#a89878 60%,#6e6650);border-radius:0;filter:blur(0.8px);"></div><div class="a" style="left:3px;top:6px;width:6px;height:5px;background:#5a5040;border-radius:40%;filter:blur(1.2px);"></div><div class="a" style="left:8px;top:20px;width:6px;height:6px;background:#5e5848;border-radius:40%;filter:blur(1.2px);"></div><div class="a" style="left:2px;top:34px;width:7px;height:6px;background:#4e5a40;border-radius:40%;filter:blur(1.2px);"></div><div class="a" style="left:17.5px;top:13.5px;width:3px;height:5.5px;background:#34466c;border-radius:0;filter:blur(0.4px);"></div><div class="a" style="left:21.5px;top:13.5px;width:3px;height:5.5px;background:#34466c;border-radius:0;filter:blur(0.4px);"></div><div class="a" style="left:25.5px;top:13.5px;width:3px;height:5.5px;background:#34466c;border-radius:0;filter:blur(0.4px);"></div><div class="a" style="left:17.5px;top:37px;width:2.5px;height:4px;background:#3a3a3a;border-radius:0;filter:blur(0.4px);"></div><div class="a" style="left:21.5px;top:37px;width:2.5px;height:4px;background:#7a5030;border-radius:0;filter:blur(0.4px);"></div><div class="a" style="left:25.5px;top:37px;width:2.5px;height:4px;background:#3a3a3a;border-radius:0;filter:blur(0.4px);"></div><div class="a" style="left:38px;top:9px;width:44px;height:25px;background:#86a65a;border-radius:45%;filter:blur(2px);"></div><div class="a" style="left:44px;top:12px;width:12px;height:8px;background:#a8c47a;border-radius:50%;filter:blur(1.5px);"></div><div class="a" style="left:60px;top:18px;width:12px;height:8px;background:#6e9048;border-radius:50%;filter:blur(1.5px);"></div><div class="a" style="left:43px;top:27px;width:10px;height:11px;background:#6e2e1e;border-radius:0;filter:blur(0.5px);"></div><div class="a" style="left:40px;top:39px;width:16px;height:8px;background:#c9b090;border-radius:0;filter:blur(0.8px);"></div><div class="a" style="left:66px;top:0px;width:28px;height:30px;background:#4a5848;border-radius:20%;filter:blur(1.6px);"></div><div class="a" style="left:70px;top:28px;width:24px;height:22px;background:#6a7858;border-radius:30%;filter:blur(1.6px);"></div><div class="a" style="left:58px;top:30px;width:2px;height:18px;background:#3e3a30;border-radius:0;filter:blur(0.5px);transform:rotate(-20deg)"></div><div class="a" style="left:30px;top:35px;width:5px;height:3px;background:#2a40a0;border-radius:0;filter:blur(0.3px);"></div><div class="a" style="left:0px;top:44px;width:94px;height:6px;background:#8a8e74;border-radius:0;filter:blur(1px);"></div></div>
<div class="a" style="left:271.6px;top:191.4px;width:45.5px;height:49.8px;overflow:hidden;background:#dddad6"><svg class="a" style="left:0;top:0" width="46" height="50" viewBox="0 0 46 50"><rect width="46" height="50" fill="#dcd9d5"/><rect x="0" y="0" width="4" height="50" fill="#c8c4c0"/><path d="M12 21 Q10 10 16.5 9.5 Q23 10 21 21Z" fill="#3b3834"/><path d="M6 28 Q6 21 16.5 20 Q27 21 27 28Z" fill="#403c37"/><rect x="7" y="27.5" width="17.5" height="23" fill="#6c1e24"/><rect x="6" y="27" width="19.5" height="2" fill="#7e2a30"/><rect x="12" y="32.5" width="8" height="4.5" fill="#f2f2f0"/><rect x="36" y="5" width="10" height="45" fill="#3c2824"/><rect x="42" y="16" width="4" height="6" fill="#c7ad5c"/><path d="M29 7 L36 6 Q38 18 40 30 L33 28 Q31 18 29 7Z" fill="#3566c4"/><path d="M27 27 L33 28 L40 30 Q39 38 39 46 L32 44 Q29 36 27 27Z" fill="#d2d03c"/><path d="M29 7 L36 6 Q38 18 40 30 L39 46" fill="none" stroke="#2a4a90" stroke-width="0.6"/><rect x="0" y="46.5" width="46" height="3.5" fill="#2c2624"/></svg></div>
<div class="a" style="left:320.9px;top:191.4px;width:83.1px;height:49.8px;overflow:hidden;background:#d2bc9c"><svg class="a" style="left:0;top:0" width="84" height="50" viewBox="0 0 84 50"><rect width="84" height="50" fill="#d2bc9c"/><rect x="0" y="0" width="16" height="26" fill="#e0ccae"/><rect x="15" y="2" width="26" height="17" fill="#7a624c"/><rect x="17" y="4" width="22" height="13" fill="#3c3430"/><circle cx="27" cy="11" r="3" fill="#8a4a36"/><rect x="32" y="8" width="4" height="6" fill="#6a6a5a"/><rect x="62" y="0" width="22" height="18" fill="#4a3a30"/><path d="M0 26 H18 V50 H0Z" fill="#6e5242"/><rect x="2" y="28" width="12" height="4" fill="#9a4434"/><rect x="1" y="36" width="14" height="3" fill="#3a2a24"/><path d="M40 50 V30 Q42 18 52 17 L66 16 Q82 18 84 26 V50Z" fill="#2a2220"/><path d="M46 14 Q45 4 54 3.5 Q63 4 62 14 Q62 24 54 25 Q46 24 46 14Z" fill="#cdb6aa"/><path d="M45 12 Q44 2 54 2 Q64 2 63 11 Q60 6 54 6 Q48 6 45 12Z" fill="#c4c0bc"/><path d="M54 22 L60 19 L64 26 L56 28Z" fill="#f0ece6"/><path d="M16 30 L38 24 L48 46 L26 50 Q20 44 16 30Z" fill="#ebe3d2"/><path d="M20 33 L38 28 M22 38 L40 33 M24 43 L42 38" stroke="#c8bca6" stroke-width="0.6"/><path d="M40 36 Q46 34 50 38 L46 44 Q42 42 40 36Z" fill="#c49a88"/></svg></div>
</div>
<!--/SLIDE-->
<div class="a" style="left:69.8px;top:172.9px;width:95.1px;height:58.8px;background:#c4431f;"></div>
<div class="a" style="left:71.6px;top:174.6px;width:91.6px;height:55.4px;overflow:hidden;background:#fff"><div class="a" style="left:0;top:0;width:409px;height:250px;transform:scale(0.224,0.2216);transform-origin:0 0">
<div class="a" style="left:0;top:0;width:409px;height:250px;overflow:hidden;background:linear-gradient(180deg,#f6f7fb 0%,#e2e8f2 32%,#c8d6ea 65%,#b4c8e3 100%)">
<svg class="a" style="left:172px;top:4px;" width="75" height="68" viewBox="0 0 75 68"><path d="M11 11 Q14 8.5 18 8 L21 10 L20.5 56 Q14 55 11.5 54.5 Q9 42 9.2 26 Q9.5 16 11 11Z" fill="#f59a2d"/><path d="M5.2 11.5 L7.6 11 L9.8 30 L7.2 30.5Z" fill="#f59a2d"/><circle cx="26.7" cy="10.8" r="6" fill="#fbfbfd" stroke="#f59a2d" stroke-width="1.5"/><path d="M31 12.5 Q46 11 62 13.5 L58.5 17.5 Q46 16 31.5 18.8Z" fill="#f59a2d"/><circle cx="26.7" cy="13.6" r="3.4" fill="#4b4b4d"/><path d="M19 17.5 Q26.5 15.5 32.5 17.5 L32.5 57 L27.5 57 L26 50 L23 57 L18.5 57 Q17.5 42 18.8 32 L9.5 32.5 L7.2 29.5 L17.5 27.5 Q17.5 21 19 17.5Z" fill="#4b4b4d"/><path d="M20 20 L22.5 19 L23 44 L21 45Z" fill="#f59a2d" opacity="0.9"/><path d="M12.5 59.5 Q30 56 50 60 Q30 58.5 12.5 61.5Z" fill="#4b4b4d"/><path d="M24.9 17.4 H56 V40 Q56 50.5 40.4 54.7 Q24.9 50.5 24.9 40Z" fill="#4b4b4d"/><path d="M26.5 19 H54.4 V40 Q54.4 49.3 40.4 53 Q26.5 49.3 26.5 40Z" fill="#fff"/><path d="M27.6 20.1 H53.3 V40 Q53.3 48.5 40.4 52 Q27.6 48.5 27.6 40Z" fill="#f59a2d"/><path d="M28.8 21.3 H52.1 V40 Q52.1 47.6 40.4 50.9 Q28.8 47.6 28.8 40Z" fill="#4b4b4d"/><path d="M29.9 22.4 H51 V40.5 Q45 38.5 40.4 41.5 Q35.8 38.5 29.9 40.5Z" fill="#fff"/><path d="M29.9 39.5 Q35.8 37.5 40.4 40.5 Q45 37.5 51 39.5 V41.8 Q45 40 40.4 43 Q35.8 40 29.9 41.8Z" fill="#f59a2d"/><path d="M32.2 25 V38.5" stroke="#4b4b4d" stroke-width="2.2"/><path d="M42 25.2 H36.3 V38.3 H38.8 Q42.3 38.3 42.3 34.8 Q42.3 31.3 38.8 31.3 H36.3" fill="none" stroke="#4b4b4d" stroke-width="2"/><path d="M44 25 L50.5 38.5 M50.5 25 L44 38.5" stroke="#4b4b4d" stroke-width="2"/><path d="M40.4 42.5 V50 M35.5 45.5 L45.3 47.5 M45.3 45 L35.5 48 M37 43.5 L43.8 49.5 M43.8 43.5 L37 49.5" stroke="#f59a2d" stroke-width="1.1"/><path d="M56.5 19 Q70 33 62 55" fill="none" stroke="#4b4b4d" stroke-width="0.9"/><ellipse cx="58.0" cy="20.5" rx="2.9" ry="1.5" transform="rotate(40 58.0 20.5)" fill="#4b4b4d"/><ellipse cx="61.5" cy="22.5" rx="2.9" ry="1.5" transform="rotate(-50 61.5 22.5)" fill="#4b4b4d"/><ellipse cx="61.0" cy="26.0" rx="2.9" ry="1.5" transform="rotate(60 61.0 26.0)" fill="#4b4b4d"/><ellipse cx="65.0" cy="28.0" rx="2.9" ry="1.5" transform="rotate(-45 65.0 28.0)" fill="#4b4b4d"/><ellipse cx="63.0" cy="31.5" rx="2.9" ry="1.5" transform="rotate(75 63.0 31.5)" fill="#4b4b4d"/><ellipse cx="67.0" cy="33.5" rx="2.9" ry="1.5" transform="rotate(-70 67.0 33.5)" fill="#4b4b4d"/><ellipse cx="63.8" cy="37.0" rx="2.9" ry="1.5" transform="rotate(85 63.8 37.0)" fill="#4b4b4d"/><ellipse cx="67.5" cy="39.0" rx="2.9" ry="1.5" transform="rotate(80 67.5 39.0)" fill="#4b4b4d"/><ellipse cx="63.0" cy="42.5" rx="2.9" ry="1.5" transform="rotate(100 63.0 42.5)" fill="#4b4b4d"/><ellipse cx="66.5" cy="44.5" rx="2.9" ry="1.5" transform="rotate(110 66.5 44.5)" fill="#4b4b4d"/><ellipse cx="61.5" cy="48.0" rx="2.9" ry="1.5" transform="rotate(115 61.5 48.0)" fill="#4b4b4d"/><path d="M52 45.5 Q60 43 68 44.5 L67 48 Q59 47 52 49Z" fill="#f59a2d"/><path d="M50 51 Q57 49 65 50 L64 53.5 Q57 53 49 55Z" fill="#f59a2d"/><path d="M47 56.5 Q54 55 61 56 L60 58.5 Q54 58 46 60Z" fill="#f59a2d"/><path d="M54 46.5 H64 M52 52 H61" stroke="#4b4b4d" stroke-width="0.6" stroke-dasharray="1 0.6"/></svg>
<div class="t" style="transform:scaleX(1.158);left:80.9px;top:69.48px;font-size:20.5px;color:#f6923c;font-weight:bold;">Інновації у створенні</div>
<div class="t" style="transform:scaleX(1.141);left:75.7px;top:94.68px;font-size:20.5px;color:#f6923c;font-weight:bold;">кровоспинних засобів</div>
<div class="a" style="left:81px;top:87.6px;width:106px;height:1px;background:rgba(226,112,120,0.75);"></div>
<div class="a" style="left:215px;top:87.6px;width:114px;height:1px;background:rgba(226,112,120,0.75);"></div>
<div class="a" style="left:76px;top:112.8px;width:166px;height:1px;background:rgba(226,112,120,0.75);"></div>
<div class="a" style="left:250px;top:112.8px;width:84px;height:1px;background:rgba(226,112,120,0.75);"></div>
<div class="t" style="transform:scaleX(1.050);left:137.9px;top:133.08px;font-size:10.5px;color:#404040;font-weight:bold;">Володимир Чернишенко</div>
<div class="t" style="transform:scaleX(1.070);left:162.5px;top:145.18px;font-size:10.5px;color:#404040;font-weight:bold;">докт. біол. наук</div>
<div class="t" style="transform:scaleX(1.032);left:72.8px;top:157.78px;font-size:10.5px;color:#404040;font-weight:bold;">Інституту біохімії ім. О.В. Палладіна НАН України</div>
<div class="t" style="transform:scaleX(1.029);left:134px;top:169.78px;font-size:10.5px;color:#404040;font-weight:bold;">bio.cherv@biochem.kiev.ua</div>
<div class="a" style="left:162.5px;top:155.7px;width:25px;height:0.9px;background:rgba(226,112,120,0.75);"></div>
<div class="a" style="left:192px;top:155.7px;width:25px;height:0.9px;background:rgba(226,112,120,0.75);"></div>
<div class="a" style="left:73px;top:167.6px;width:49px;height:0.9px;background:rgba(226,112,120,0.75);"></div>
<div class="a" style="left:126px;top:167.6px;width:41px;height:0.9px;background:rgba(226,112,120,0.75);"></div>
<div class="a" style="left:170px;top:167.6px;width:12px;height:0.9px;background:rgba(226,112,120,0.75);"></div>
<div class="a" style="left:212px;top:167.6px;width:55px;height:0.9px;background:rgba(226,112,120,0.75);"></div>
<div class="a" style="left:295px;top:167.6px;width:42px;height:0.9px;background:rgba(226,112,120,0.75);"></div>
<div class="a" style="left:9.4px;top:191.4px;width:85.4px;height:49.8px;overflow:hidden;background:#e4e4e4"><svg class="a" style="left:0;top:0;filter:blur(0.35px)" width="86" height="50" viewBox="0 0 86 50"><rect width="86" height="50" fill="#e2e2e2"/><rect x="0" y="0" width="86" height="12" fill="#ececec"/><path d="M30 0 V50 M44 0 V14 M60 0 V10" stroke="#bdbdbd" stroke-width="0.8"/><rect x="69" y="3" width="17" height="47" fill="#a8a8a8"/><rect x="70" y="8" width="4" height="12" fill="#3a3a3a"/><rect x="77" y="12" width="3" height="10" fill="#555"/><rect x="82" y="6" width="3" height="16" fill="#2e2e2e"/><rect x="69" y="24" width="17" height="3" fill="#ddd"/><rect x="70" y="29" width="15" height="10" fill="#3e3e3e"/><rect x="72" y="31" width="6" height="5" fill="#bbb"/><rect x="69" y="40" width="17" height="10" fill="#ececec"/><path d="M1 50 V32 Q1 30 5 30 L11 31 V50Z" fill="#2a2a2a"/><path d="M2 50 V24 Q3 16 12 15 L20 15 Q27 17 27 26 V50Z" fill="#c4c4c4"/><path d="M20 18 Q27 20 27 28 V50 H22Z" fill="#8e8e8e"/><path d="M23 24 L32 30 L30 42 L24 40Z" fill="#4a4a4a"/><ellipse cx="16" cy="9.5" rx="5" ry="6.5" fill="#d4d4d4"/><path d="M10.5 8 Q10 1.5 16 1.5 Q22 1.5 21.5 8 Q20 4.5 16 4.5 Q12 4.5 10.5 8Z" fill="#202020"/><path d="M12.5 14 Q16 19 19.5 14 L19 17.5 Q16 20 13 17.5Z" fill="#3a3a3a"/><path d="M13 9 H15.5 M17 9 H19.5" stroke="#444" stroke-width="1"/><path d="M30 50 V26 Q31 17 40 17 Q49 17 50 26 V50Z" fill="#f2f2f2"/><path d="M44 20 Q50 22 50 30 V50 H46Z" fill="#cfcfcf"/><ellipse cx="38" cy="12" rx="4.2" ry="5.5" fill="#d6d6d6"/><path d="M33 13 Q32 5 38.5 5 Q44 5 44 12 Q44 17 42 18 Q42 10 38 9.5 Q35 10 35 16Z" fill="#2a2a2a"/><path d="M36 12 H40" stroke="#555" stroke-width="0.8"/><path d="M49 50 V28 Q50 19 58 19 Q68 19 71 28 V50Z" fill="#f3f3f3"/><path d="M64 22 Q71 25 71 32 V50 H66Z" fill="#d2d2d2"/><ellipse cx="53.5" cy="16" rx="3.5" ry="5" fill="#dadada"/><path d="M50 12 Q51 5.5 57.5 6 Q65 6.5 65 14 Q65 20 60 21 Q58 14 54 11Z" fill="#1e1e1e"/><path d="M55 38 H70 V44 H55Z" fill="#404040"/><path d="M38 33 Q44 30 50 34 L48 38 Q43 36 38 37Z" fill="#d0d0d0"/><path d="M36 36 L44 40 L40 44Z" fill="#4a4a4a"/><circle cx="41" cy="27" r="1.2" fill="#3a3a3a"/></svg></div>
<div class="a" style="left:97.3px;top:191.4px;width:73.1px;height:49.8px;overflow:hidden;background:#a2a4a9"><svg class="a" style="left:0;top:0" width="74" height="50" viewBox="0 0 74 50"><rect width="74" height="50" fill="#a3a5aa"/><rect x="52" width="22" height="50" fill="#b6b8bd"/><rect x="0.5" y="0" width="2" height="50" fill="#4a4a4e"/><rect x="64" y="0" width="9" height="14" fill="#2f3446"/><path d="M8 50 L7 22 Q8 6 20 2 L58 0 Q66 6 66 24 L64 42 L54 50Z" fill="#857d64"/><path d="M12 10 Q20 6 24 14 Q18 18 12 10Z M40 4 Q50 2 52 10 Q44 14 40 4Z M46 22 Q56 18 60 28 Q52 32 46 22Z M20 34 Q28 30 32 38 Q24 42 20 34Z M52 36 Q60 34 62 42 Q56 46 52 36Z M30 16 Q36 12 40 20 Q34 24 30 16Z" fill="#5f5a46"/><path d="M26 6 Q32 4 34 10 Q28 12 26 6Z M50 14 Q56 12 58 18 Q52 20 50 14Z M12 28 Q18 26 20 32 Q14 34 12 28Z M36 40 Q42 38 44 44 Q38 46 36 40Z" fill="#aaa386"/><path d="M8 9 L14 6 L24 22 L20 26Z" fill="#2a2a28"/><path d="M18 24 L26 20 L42 48 L30 50Z" fill="#2c2b28"/><rect x="22" y="0" width="3.5" height="21" fill="#b9a56a"/><rect x="9" y="15" width="7" height="5" fill="#d8d03e"/><rect x="31" y="15" width="5" height="5" fill="#d63c3c"/><rect x="31" y="20" width="5" height="6" fill="#f0f0f0"/><path d="M18 22 Q24 18 30 22 Q31 28 24 30 Q18 29 18 22Z" fill="#c29a86"/><path d="M38 44 Q44 41 50 44 L48 49 L38 49Z" fill="#b48e7c"/></svg></div>
<div class="a" style="left:172.5px;top:191.4px;width:93.4px;height:49.8px;overflow:hidden;background:#d3d7da"><div class="a" style="left:16px;top:0px;width:52px;height:50px;background:linear-gradient(#dfe2e5,#d2d5d8 60%,#c6c9cc);border-radius:0;filter:blur(0.5px);"></div><div class="a" style="left:16px;top:8px;width:50px;height:3px;background:#f0f1f2;border-radius:0;filter:blur(0.5px);"></div><div class="a" style="left:0px;top:0px;width:17px;height:50px;background:linear-gradient(180deg,#8e7e60,#c2b28e 35%,#a89878 60%,#6e6650);border-radius:0;filter:blur(0.8px);"></div><div class="a" style="left:3px;top:6px;width:6px;height:5px;background:#5a5040;border-radius:40%;filter:blur(1.2px);"></div><div class="a" style="left:8px;top:20px;width:6px;height:6px;background:#5e5848;border-radius:40%;filter:blur(1.2px);"></div><div class="a" style="left:2px;top:34px;width:7px;height:6px;background:#4e5a40;border-radius:40%;filter:blur(1.2px);"></div><div class="a" style="left:17.5px;top:13.5px;width:3px;height:5.5px;background:#34466c;border-radius:0;filter:blur(0.4px);"></div><div class="a" style="left:21.5px;top:13.5px;width:3px;height:5.5px;background:#34466c;border-radius:0;filter:blur(0.4px);"></div><div class="a" style="left:25.5px;top:13.5px;width:3px;height:5.5px;background:#34466c;border-radius:0;filter:blur(0.4px);"></div><div class="a" style="left:17.5px;top:37px;width:2.5px;height:4px;background:#3a3a3a;border-radius:0;filter:blur(0.4px);"></div><div class="a" style="left:21.5px;top:37px;width:2.5px;height:4px;background:#7a5030;border-radius:0;filter:blur(0.4px);"></div><div class="a" style="left:25.5px;top:37px;width:2.5px;height:4px;background:#3a3a3a;border-radius:0;filter:blur(0.4px);"></div><div class="a" style="left:38px;top:9px;width:44px;height:25px;background:#86a65a;border-radius:45%;filter:blur(2px);"></div><div class="a" style="left:44px;top:12px;width:12px;height:8px;background:#a8c47a;border-radius:50%;filter:blur(1.5px);"></div><div class="a" style="left:60px;top:18px;width:12px;height:8px;background:#6e9048;border-radius:50%;filter:blur(1.5px);"></div><div class="a" style="left:43px;top:27px;width:10px;height:11px;background:#6e2e1e;border-radius:0;filter:blur(0.5px);"></div><div class="a" style="left:40px;top:39px;width:16px;height:8px;background:#c9b090;border-radius:0;filter:blur(0.8px);"></div><div class="a" style="left:66px;top:0px;width:28px;height:30px;background:#4a5848;border-radius:20%;filter:blur(1.6px);"></div><div class="a" style="left:70px;top:28px;width:24px;height:22px;background:#6a7858;border-radius:30%;filter:blur(1.6px);"></div><div class="a" style="left:58px;top:30px;width:2px;height:18px;background:#3e3a30;border-radius:0;filter:blur(0.5px);transform:rotate(-20deg)"></div><div class="a" style="left:30px;top:35px;width:5px;height:3px;background:#2a40a0;border-radius:0;filter:blur(0.3px);"></div><div class="a" style="left:0px;top:44px;width:94px;height:6px;background:#8a8e74;border-radius:0;filter:blur(1px);"></div></div>
<div class="a" style="left:271.6px;top:191.4px;width:45.5px;height:49.8px;overflow:hidden;background:#dddad6"><svg class="a" style="left:0;top:0" width="46" height="50" viewBox="0 0 46 50"><rect width="46" height="50" fill="#dcd9d5"/><rect x="0" y="0" width="4" height="50" fill="#c8c4c0"/><path d="M12 21 Q10 10 16.5 9.5 Q23 10 21 21Z" fill="#3b3834"/><path d="M6 28 Q6 21 16.5 20 Q27 21 27 28Z" fill="#403c37"/><rect x="7" y="27.5" width="17.5" height="23" fill="#6c1e24"/><rect x="6" y="27" width="19.5" height="2" fill="#7e2a30"/><rect x="12" y="32.5" width="8" height="4.5" fill="#f2f2f0"/><rect x="36" y="5" width="10" height="45" fill="#3c2824"/><rect x="42" y="16" width="4" height="6" fill="#c7ad5c"/><path d="M29 7 L36 6 Q38 18 40 30 L33 28 Q31 18 29 7Z" fill="#3566c4"/><path d="M27 27 L33 28 L40 30 Q39 38 39 46 L32 44 Q29 36 27 27Z" fill="#d2d03c"/><path d="M29 7 L36 6 Q38 18 40 30 L39 46" fill="none" stroke="#2a4a90" stroke-width="0.6"/><rect x="0" y="46.5" width="46" height="3.5" fill="#2c2624"/></svg></div>
<div class="a" style="left:320.9px;top:191.4px;width:83.1px;height:49.8px;overflow:hidden;background:#d2bc9c"><svg class="a" style="left:0;top:0" width="84" height="50" viewBox="0 0 84 50"><rect width="84" height="50" fill="#d2bc9c"/><rect x="0" y="0" width="16" height="26" fill="#e0ccae"/><rect x="15" y="2" width="26" height="17" fill="#7a624c"/><rect x="17" y="4" width="22" height="13" fill="#3c3430"/><circle cx="27" cy="11" r="3" fill="#8a4a36"/><rect x="32" y="8" width="4" height="6" fill="#6a6a5a"/><rect x="62" y="0" width="22" height="18" fill="#4a3a30"/><path d="M0 26 H18 V50 H0Z" fill="#6e5242"/><rect x="2" y="28" width="12" height="4" fill="#9a4434"/><rect x="1" y="36" width="14" height="3" fill="#3a2a24"/><path d="M40 50 V30 Q42 18 52 17 L66 16 Q82 18 84 26 V50Z" fill="#2a2220"/><path d="M46 14 Q45 4 54 3.5 Q63 4 62 14 Q62 24 54 25 Q46 24 46 14Z" fill="#cdb6aa"/><path d="M45 12 Q44 2 54 2 Q64 2 63 11 Q60 6 54 6 Q48 6 45 12Z" fill="#c4c0bc"/><path d="M54 22 L60 19 L64 26 L56 28Z" fill="#f0ece6"/><path d="M16 30 L38 24 L48 46 L26 50 Q20 44 16 30Z" fill="#ebe3d2"/><path d="M20 33 L38 28 M22 38 L40 33 M24 43 L42 38" stroke="#c8bca6" stroke-width="0.6"/><path d="M40 36 Q46 34 50 38 L46 44 Q42 42 40 36Z" fill="#c49a88"/></svg></div>
</div>
</div></div>
<div class="a" style="left:71.7px;top:240.7px;width:91.7px;height:55.1px;background:linear-gradient(180deg,#f5f7fb 0%,#dfe6f1 50%,#bccde5 100%);"></div>
<svg class="a" style="left:85px;top:243.7px;filter:blur(0.35px)" width="52" height="3.6" viewBox="0 0 52 3.6"><path d="M0 1.8H52" stroke="rgba(25,40,110,0.75)" stroke-width="1.3" stroke-dasharray="3 0.8 5 0.8 2 0.8 4 0.8"/></svg>
<svg class="a" style="left:81px;top:247.2px;filter:blur(0.35px)" width="60" height="3.6" viewBox="0 0 60 3.6"><path d="M0 1.8H60" stroke="rgba(25,40,110,0.75)" stroke-width="1.3" stroke-dasharray="3 0.8 5 0.8 2 0.8 4 0.8"/></svg>
<svg class="a" style="left:94px;top:250.7px;filter:blur(0.35px)" width="35" height="3.6" viewBox="0 0 35 3.6"><path d="M0 1.8H35" stroke="rgba(25,40,110,0.75)" stroke-width="1.3" stroke-dasharray="3 0.8 5 0.8 2 0.8 4 0.8"/></svg>
<svg class="a" style="left:147px;top:241.5px;" width="15" height="12" viewBox="0 0 15 12"><g transform="scale(1)"><path d="M1 3 Q4 1 7 2 L7 11 Q3 10 1 3Z" fill="#f59a2d"/><path d="M6 1 Q11 0 14 2 L13 4 Q10 3 6 4Z" fill="#f59a2d"/><path d="M5 3 H13 V8 Q13 11 9 12 Q5 11 5 8Z" fill="#4b4b4d"/><rect x="6.5" y="4.5" width="5" height="4" fill="#fff"/><circle cx="4.5" cy="2" r="1.4" fill="none" stroke="#f59a2d" stroke-width="0.6"/></g></svg>
<div class="a" style="left:75px;top:255px;width:41px;height:23.5px;overflow:hidden;background:linear-gradient(90deg,#cfcfcf,#f0f0f0 40%,#d8d8d8)"><div class="a" style="left:0;top:12px;width:10px;height:12px;background:#333;filter:blur(0.8px)"></div><div class="a" style="left:3px;top:8px;width:12px;height:16px;border-radius:40% 40% 0 0;background:#bdbdbd"></div><div class="a" style="left:6px;top:2px;width:6px;height:6px;border-radius:50%;background:#2a2a2a;filter:blur(0.3px)"></div><div class="a" style="left:15px;top:9px;width:11px;height:15px;border-radius:40% 40% 0 0;background:#f4f4f4"></div><div class="a" style="left:17px;top:3px;width:6px;height:6px;border-radius:50%;background:#333;filter:blur(0.3px)"></div><div class="a" style="left:26px;top:10px;width:11px;height:14px;border-radius:40% 40% 0 0;background:#ececec"></div><div class="a" style="left:27px;top:4px;width:7px;height:7px;border-radius:50%;background:#222;filter:blur(0.3px)"></div><div class="a" style="left:36px;top:0;width:5px;height:24px;background:#777;filter:blur(0.5px)"></div></div>
<div class="a" style="left:117.9px;top:255px;width:41.4px;height:23.5px;background:#15110d;padding:2.2px"><div style="width:100%;height:100%;background:linear-gradient(90deg,#c0821f,#e2ac4a 50%,#c58a28)"></div></div>
<svg class="a" style="left:76px;top:280.1px;filter:blur(0.25px)" width="39" height="2.8" viewBox="0 0 39 2.8"><path d="M0 1.4H39" stroke="rgba(50,55,90,0.45)" stroke-width="0.9" stroke-dasharray="3 0.8 5 0.8 2 0.8 4 0.8"/></svg>
<svg class="a" style="left:76px;top:282.3px;filter:blur(0.25px)" width="39" height="2.8" viewBox="0 0 39 2.8"><path d="M0 1.4H39" stroke="rgba(50,55,90,0.45)" stroke-width="0.9" stroke-dasharray="3 0.8 5 0.8 2 0.8 4 0.8"/></svg>
<svg class="a" style="left:76px;top:284.5px;filter:blur(0.25px)" width="39" height="2.8" viewBox="0 0 39 2.8"><path d="M0 1.4H39" stroke="rgba(50,55,90,0.45)" stroke-width="0.9" stroke-dasharray="3 0.8 5 0.8 2 0.8 4 0.8"/></svg>
<svg class="a" style="left:76px;top:286.70000000000005px;filter:blur(0.25px)" width="22" height="2.8" viewBox="0 0 22 2.8"><path d="M0 1.4H22" stroke="rgba(50,55,90,0.45)" stroke-width="0.9" stroke-dasharray="3 0.8 5 0.8 2 0.8 4 0.8"/></svg>
<svg class="a" style="left:120px;top:280.1px;filter:blur(0.25px)" width="39" height="2.8" viewBox="0 0 39 2.8"><path d="M0 1.4H39" stroke="rgba(50,55,90,0.45)" stroke-width="0.9" stroke-dasharray="3 0.8 5 0.8 2 0.8 4 0.8"/></svg>
<svg class="a" style="left:120px;top:282.3px;filter:blur(0.25px)" width="39" height="2.8" viewBox="0 0 39 2.8"><path d="M0 1.4H39" stroke="rgba(50,55,90,0.45)" stroke-width="0.9" stroke-dasharray="3 0.8 5 0.8 2 0.8 4 0.8"/></svg>
<svg class="a" style="left:120px;top:284.5px;filter:blur(0.25px)" width="39" height="2.8" viewBox="0 0 39 2.8"><path d="M0 1.4H39" stroke="rgba(50,55,90,0.45)" stroke-width="0.9" stroke-dasharray="3 0.8 5 0.8 2 0.8 4 0.8"/></svg>
<svg class="a" style="left:120px;top:286.70000000000005px;filter:blur(0.25px)" width="39" height="2.8" viewBox="0 0 39 2.8"><path d="M0 1.4H39" stroke="rgba(50,55,90,0.45)" stroke-width="0.9" stroke-dasharray="3 0.8 5 0.8 2 0.8 4 0.8"/></svg>
<svg class="a" style="left:120px;top:288.90000000000003px;filter:blur(0.25px)" width="39" height="2.8" viewBox="0 0 39 2.8"><path d="M0 1.4H39" stroke="rgba(50,55,90,0.45)" stroke-width="0.9" stroke-dasharray="3 0.8 5 0.8 2 0.8 4 0.8"/></svg>
<svg class="a" style="left:120px;top:291.1px;filter:blur(0.25px)" width="24" height="2.8" viewBox="0 0 24 2.8"><path d="M0 1.4H24" stroke="rgba(50,55,90,0.45)" stroke-width="0.9" stroke-dasharray="3 0.8 5 0.8 2 0.8 4 0.8"/></svg>
<div class="a" style="left:72px;top:306px;width:91.8px;height:55px;background:linear-gradient(180deg,#f5f7fb 0%,#dfe6f1 50%,#bccde5 100%);"></div>
<svg class="a" style="left:80px;top:310.1px;filter:blur(0.35px)" width="56" height="3.8" viewBox="0 0 56 3.8"><path d="M0 1.9H56" stroke="rgba(25,40,110,0.75)" stroke-width="1.4" stroke-dasharray="3 0.8 5 0.8 2 0.8 4 0.8"/></svg>
<svg class="a" style="left:88px;top:314.6px;filter:blur(0.35px)" width="42" height="3.8" viewBox="0 0 42 3.8"><path d="M0 1.9H42" stroke="rgba(25,40,110,0.75)" stroke-width="1.4" stroke-dasharray="3 0.8 5 0.8 2 0.8 4 0.8"/></svg>
<svg class="a" style="left:147px;top:307px;" width="15" height="12" viewBox="0 0 15 12"><g transform="scale(1)"><path d="M1 3 Q4 1 7 2 L7 11 Q3 10 1 3Z" fill="#f59a2d"/><path d="M6 1 Q11 0 14 2 L13 4 Q10 3 6 4Z" fill="#f59a2d"/><path d="M5 3 H13 V8 Q13 11 9 12 Q5 11 5 8Z" fill="#4b4b4d"/><rect x="6.5" y="4.5" width="5" height="4" fill="#fff"/><circle cx="4.5" cy="2" r="1.4" fill="none" stroke="#f59a2d" stroke-width="0.6"/></g></svg>
<div class="a" style="left:77.5px;top:322px;width:38.2px;height:20.8px;overflow:hidden;background:linear-gradient(135deg,#8f8878,#b4ad98 40%,#7e7868)"><div class="a" style="left:6px;top:4px;width:14px;height:9px;background:#e0dccf;filter:blur(1px)"></div><div class="a" style="left:18px;top:10px;width:18px;height:10px;background:#4a463c;filter:blur(1.2px)"></div></div>
<div class="a" style="left:121.9px;top:322px;width:33.6px;height:20.8px;overflow:hidden;background:linear-gradient(135deg,#7a7a7a,#c8c8c8 50%,#8a8a8a)"><div class="a" style="left:4px;top:6px;width:24px;height:18px;border-radius:50% 50% 0 0;background:#e8e8e8;filter:blur(1.5px)"></div><div class="a" style="left:0;top:0;width:12px;height:8px;background:#3a3a3a;filter:blur(1px)"></div></div>
<svg class="a" style="left:77px;top:345.1px;filter:blur(0.25px)" width="38" height="2.8" viewBox="0 0 38 2.8"><path d="M0 1.4H38" stroke="rgba(50,55,90,0.45)" stroke-width="0.9" stroke-dasharray="3 0.8 5 0.8 2 0.8 4 0.8"/></svg>
<svg class="a" style="left:77px;top:347.3px;filter:blur(0.25px)" width="38" height="2.8" viewBox="0 0 38 2.8"><path d="M0 1.4H38" stroke="rgba(50,55,90,0.45)" stroke-width="0.9" stroke-dasharray="3 0.8 5 0.8 2 0.8 4 0.8"/></svg>
<svg class="a" style="left:77px;top:349.5px;filter:blur(0.25px)" width="38" height="2.8" viewBox="0 0 38 2.8"><path d="M0 1.4H38" stroke="rgba(50,55,90,0.45)" stroke-width="0.9" stroke-dasharray="3 0.8 5 0.8 2 0.8 4 0.8"/></svg>
<svg class="a" style="left:77px;top:351.70000000000005px;filter:blur(0.25px)" width="38" height="2.8" viewBox="0 0 38 2.8"><path d="M0 1.4H38" stroke="rgba(50,55,90,0.45)" stroke-width="0.9" stroke-dasharray="3 0.8 5 0.8 2 0.8 4 0.8"/></svg>
<svg class="a" style="left:77px;top:353.90000000000003px;filter:blur(0.25px)" width="26" height="2.8" viewBox="0 0 26 2.8"><path d="M0 1.4H26" stroke="rgba(50,55,90,0.45)" stroke-width="0.9" stroke-dasharray="3 0.8 5 0.8 2 0.8 4 0.8"/></svg>
<svg class="a" style="left:121px;top:345.1px;filter:blur(0.25px)" width="36" height="2.8" viewBox="0 0 36 2.8"><path d="M0 1.4H36" stroke="rgba(50,55,90,0.45)" stroke-width="0.9" stroke-dasharray="3 0.8 5 0.8 2 0.8 4 0.8"/></svg>
<svg class="a" style="left:121px;top:347.3px;filter:blur(0.25px)" width="36" height="2.8" viewBox="0 0 36 2.8"><path d="M0 1.4H36" stroke="rgba(50,55,90,0.45)" stroke-width="0.9" stroke-dasharray="3 0.8 5 0.8 2 0.8 4 0.8"/></svg>
<svg class="a" style="left:121px;top:349.5px;filter:blur(0.25px)" width="36" height="2.8" viewBox="0 0 36 2.8"><path d="M0 1.4H36" stroke="rgba(50,55,90,0.45)" stroke-width="0.9" stroke-dasharray="3 0.8 5 0.8 2 0.8 4 0.8"/></svg>
<svg class="a" style="left:121px;top:351.70000000000005px;filter:blur(0.25px)" width="36" height="2.8" viewBox="0 0 36 2.8"><path d="M0 1.4H36" stroke="rgba(50,55,90,0.45)" stroke-width="0.9" stroke-dasharray="3 0.8 5 0.8 2 0.8 4 0.8"/></svg>
<svg class="a" style="left:121px;top:353.90000000000003px;filter:blur(0.25px)" width="24" height="2.8" viewBox="0 0 24 2.8"><path d="M0 1.4H24" stroke="rgba(50,55,90,0.45)" stroke-width="0.9" stroke-dasharray="3 0.8 5 0.8 2 0.8 4 0.8"/></svg>
<div class="a" style="left:72px;top:372.5px;width:91.8px;height:55.3px;background:linear-gradient(180deg,#f5f7fb 0%,#dfe6f1 50%,#bccde5 100%);"></div>
<svg class="a" style="left:80px;top:376.1px;filter:blur(0.35px)" width="56" height="3.8" viewBox="0 0 56 3.8"><path d="M0 1.9H56" stroke="rgba(25,40,110,0.75)" stroke-width="1.4" stroke-dasharray="3 0.8 5 0.8 2 0.8 4 0.8"/></svg>
<svg class="a" style="left:88px;top:380.6px;filter:blur(0.35px)" width="42" height="3.8" viewBox="0 0 42 3.8"><path d="M0 1.9H42" stroke="rgba(25,40,110,0.75)" stroke-width="1.4" stroke-dasharray="3 0.8 5 0.8 2 0.8 4 0.8"/></svg>
<svg class="a" style="left:147px;top:373.5px;" width="15" height="12" viewBox="0 0 15 12"><g transform="scale(1)"><path d="M1 3 Q4 1 7 2 L7 11 Q3 10 1 3Z" fill="#f59a2d"/><path d="M6 1 Q11 0 14 2 L13 4 Q10 3 6 4Z" fill="#f59a2d"/><path d="M5 3 H13 V8 Q13 11 9 12 Q5 11 5 8Z" fill="#4b4b4d"/><rect x="6.5" y="4.5" width="5" height="4" fill="#fff"/><circle cx="4.5" cy="2" r="1.4" fill="none" stroke="#f59a2d" stroke-width="0.6"/></g></svg>
<div class="a" style="left:83.6px;top:386.5px;width:24.4px;height:24.2px;background:#c9ced8;overflow:hidden"><div class="a" style="left:7px;top:3px;width:10px;height:12px;border-radius:50%;background:#d9a58a"></div><div class="a" style="left:7px;top:1px;width:10px;height:5px;border-radius:50% 50% 0 0;background:#8a8a8a"></div><div class="a" style="left:1px;top:14px;width:22px;height:11px;border-radius:40% 40% 0 0;background:#1e1e22"></div><div class="a" style="left:10px;top:15px;width:4px;height:8px;background:#eee"></div></div>
<div class="a" style="left:117.9px;top:388px;width:39.7px;height:20.6px;overflow:hidden;background:linear-gradient(180deg,#e8e8e8,#c8c8c8)"><div class="a" style="left:2.0px;top:3px;width:5px;height:5px;border-radius:50%;background:#2a2a2a;filter:blur(0.4px)"></div><div class="a" style="left:1.0px;top:8px;width:6px;height:12px;background:#555;filter:blur(0.4px)"></div><div class="a" style="left:8.5px;top:5px;width:5px;height:5px;border-radius:50%;background:#2a2a2a;filter:blur(0.4px)"></div><div class="a" style="left:7.5px;top:10px;width:6px;height:12px;background:#f2f2f2;filter:blur(0.4px)"></div><div class="a" style="left:15.0px;top:3px;width:5px;height:5px;border-radius:50%;background:#2a2a2a;filter:blur(0.4px)"></div><div class="a" style="left:14.0px;top:8px;width:6px;height:12px;background:#555;filter:blur(0.4px)"></div><div class="a" style="left:21.5px;top:5px;width:5px;height:5px;border-radius:50%;background:#2a2a2a;filter:blur(0.4px)"></div><div class="a" style="left:20.5px;top:10px;width:6px;height:12px;background:#f2f2f2;filter:blur(0.4px)"></div><div class="a" style="left:28.0px;top:3px;width:5px;height:5px;border-radius:50%;background:#2a2a2a;filter:blur(0.4px)"></div><div class="a" style="left:27.0px;top:8px;width:6px;height:12px;background:#555;filter:blur(0.4px)"></div><div class="a" style="left:34.5px;top:5px;width:5px;height:5px;border-radius:50%;background:#2a2a2a;filter:blur(0.4px)"></div><div class="a" style="left:33.5px;top:10px;width:6px;height:12px;background:#f2f2f2;filter:blur(0.4px)"></div></div>
<svg class="a" style="left:77px;top:411.6px;filter:blur(0.25px)" width="38" height="2.8" viewBox="0 0 38 2.8"><path d="M0 1.4H38" stroke="rgba(50,55,90,0.45)" stroke-width="0.9" stroke-dasharray="3 0.8 5 0.8 2 0.8 4 0.8"/></svg>
<svg class="a" style="left:77px;top:413.8px;filter:blur(0.25px)" width="38" height="2.8" viewBox="0 0 38 2.8"><path d="M0 1.4H38" stroke="rgba(50,55,90,0.45)" stroke-width="0.9" stroke-dasharray="3 0.8 5 0.8 2 0.8 4 0.8"/></svg>
<svg class="a" style="left:77px;top:416.0px;filter:blur(0.25px)" width="38" height="2.8" viewBox="0 0 38 2.8"><path d="M0 1.4H38" stroke="rgba(50,55,90,0.45)" stroke-width="0.9" stroke-dasharray="3 0.8 5 0.8 2 0.8 4 0.8"/></svg>
<svg class="a" style="left:77px;top:418.20000000000005px;filter:blur(0.25px)" width="38" height="2.8" viewBox="0 0 38 2.8"><path d="M0 1.4H38" stroke="rgba(50,55,90,0.45)" stroke-width="0.9" stroke-dasharray="3 0.8 5 0.8 2 0.8 4 0.8"/></svg>
<svg class="a" style="left:77px;top:420.40000000000003px;filter:blur(0.25px)" width="38" height="2.8" viewBox="0 0 38 2.8"><path d="M0 1.4H38" stroke="rgba(50,55,90,0.45)" stroke-width="0.9" stroke-dasharray="3 0.8 5 0.8 2 0.8 4 0.8"/></svg>
<svg class="a" style="left:77px;top:422.6px;filter:blur(0.25px)" width="28" height="2.8" viewBox="0 0 28 2.8"><path d="M0 1.4H28" stroke="rgba(50,55,90,0.45)" stroke-width="0.9" stroke-dasharray="3 0.8 5 0.8 2 0.8 4 0.8"/></svg>
<svg class="a" style="left:124px;top:410.6px;filter:blur(0.25px)" width="32" height="2.8" viewBox="0 0 32 2.8"><path d="M0 1.4H32" stroke="rgba(50,55,90,0.45)" stroke-width="0.9" stroke-dasharray="3 0.8 5 0.8 2 0.8 4 0.8"/></svg>
<div class="a" style="left:72px;top:439px;width:91.8px;height:14.5px;overflow:hidden;background:linear-gradient(180deg,#f5f7fb 0%,#dfe6f1 50%,#bccde5 100%)"></div>
<svg class="a" style="left:80px;top:442.6px;filter:blur(0.35px)" width="56" height="3.8" viewBox="0 0 56 3.8"><path d="M0 1.9H56" stroke="rgba(25,40,110,0.75)" stroke-width="1.4" stroke-dasharray="3 0.8 5 0.8 2 0.8 4 0.8"/></svg>
<svg class="a" style="left:88px;top:447.1px;filter:blur(0.35px)" width="42" height="3.8" viewBox="0 0 42 3.8"><path d="M0 1.9H42" stroke="rgba(25,40,110,0.75)" stroke-width="1.4" stroke-dasharray="3 0.8 5 0.8 2 0.8 4 0.8"/></svg>
<svg class="a" style="left:147px;top:440px;" width="15" height="12" viewBox="0 0 15 12"><g transform="scale(1)"><path d="M1 3 Q4 1 7 2 L7 11 Q3 10 1 3Z" fill="#f59a2d"/><path d="M6 1 Q11 0 14 2 L13 4 Q10 3 6 4Z" fill="#f59a2d"/><path d="M5 3 H13 V8 Q13 11 9 12 Q5 11 5 8Z" fill="#4b4b4d"/><rect x="6.5" y="4.5" width="5" height="4" fill="#fff"/><circle cx="4.5" cy="2" r="1.4" fill="none" stroke="#f59a2d" stroke-width="0.6"/></g></svg>
<div class="t" style="transform:scaleX(0.790);left:58.3px;top:456.45px;font-size:7px;color:#444;">Слайд 1 з 18</div>
<svg class="a" style="left:102px;top:456px;" width="9" height="7" viewBox="0 0 9 7"><rect x="0.5" y="0.5" width="7.5" height="6" fill="none" stroke="#666" stroke-width="0.7"/><path d="M3 4 L5 2.5 L6 5" fill="none" stroke="#666" stroke-width="0.7"/></svg>
<div class="t" style="transform:scaleX(0.805);left:119.8px;top:456.45px;font-size:7px;color:#444;">українська</div>
<svg class="a" style="left:154px;top:455.5px;" width="10" height="8" viewBox="0 0 10 8"><path d="M1 5 Q2 1 5.5 2 L4 4 L8 5 L6 7 M6 3 L8 2" fill="none" stroke="#444" stroke-width="0.8"/></svg>
<div class="t" style="transform:scaleX(0.817);left:167.4px;top:456.45px;font-size:7px;color:#444;">Спеціальні можливості: усе добре</div>
<svg class="a" style="left:611px;top:456px;" width="8" height="7" viewBox="0 0 8 7"><path d="M1 6 L4 1 L7 6 M2.5 4 H5.5" fill="none" stroke="#555" stroke-width="0.8"/></svg>
<div class="t" style="transform:scaleX(1.161);left:620.5px;top:456.45px;font-size:7px;color:#444;">Нотатки</div>
<svg class="a" style="left:660px;top:456px;" width="8" height="7" viewBox="0 0 8 7"><path d="M0.5 0.5 H7.5 V5 H3 L1.5 6.5 V5 H0.5Z" fill="#444"/></svg>
<div class="t" style="transform:scaleX(0.851);left:670px;top:456.45px;font-size:7px;color:#444;">Примітки</div>
<div class="a" style="left:706.5px;top:455px;width:21.1px;height:9px;background:#d2d2d2;"></div>
<svg class="a" style="left:712px;top:456px;" width="10" height="7" viewBox="0 0 10 7"><rect x="0.5" y="0.5" width="9" height="6" fill="none" stroke="#555" stroke-width="0.7"/><rect x="2" y="2" width="3" height="3" fill="#888"/></svg>
<svg class="a" style="left:734.5px;top:456px;" width="9" height="7" viewBox="0 0 9 7"><rect x="0.5" y="0.5" width="3" height="2.5" fill="none" stroke="#777" stroke-width="0.6"/><rect x="5" y="0.5" width="3" height="2.5" fill="none" stroke="#777" stroke-width="0.6"/><rect x="0.5" y="4" width="3" height="2.5" fill="none" stroke="#777" stroke-width="0.6"/><rect x="5" y="4" width="3" height="2.5" fill="none" stroke="#777" stroke-width="0.6"/></svg>
<svg class="a" style="left:756.5px;top:456px;" width="9" height="7" viewBox="0 0 9 7"><rect x="0.5" y="0.5" width="8" height="6" fill="none" stroke="#777" stroke-width="0.6"/><path d="M4.5 0.5V6.5M1.5 2H3.5M1.5 4H3.5M5.5 2H7.5M5.5 4H7.5" stroke="#777" stroke-width="0.5"/></svg>
<svg class="a" style="left:778.5px;top:455.5px;" width="9" height="8" viewBox="0 0 9 8"><path d="M0.5 1H8.5M4.5 1V6M2 7.5 L4.5 6 L7 7.5M1.5 1V4H7.5V1" fill="none" stroke="#666" stroke-width="0.7"/></svg>
<div class="a" style="left:798.5px;top:459.3px;width:3.5px;height:0.8px;background:#666;"></div>
<div class="a" style="left:805px;top:459.5px;width:60px;height:0.7px;background:#888;"></div>
<div class="a" style="left:825px;top:456px;width:2.6px;height:7.5px;background:#333;"></div>
<div class="a" style="left:832px;top:458.3px;width:0.7px;height:2.5px;background:#777;"></div>
<svg class="a" style="left:862.5px;top:456.5px;" width="6" height="6" viewBox="0 0 6 6"><path d="M0.5 3H5.5M3 0.5V5.5" stroke="#666" stroke-width="0.7"/></svg>
<div class="t" style="transform:scaleX(0.749);left:876px;top:456.45px;font-size:7px;color:#444;">77%</div>
<svg class="a" style="left:893px;top:456px;" width="9" height="7" viewBox="0 0 9 7"><rect x="0.5" y="0.5" width="8" height="6" fill="none" stroke="#777" stroke-width="0.6"/><path d="M2 2V5M7 2V5" stroke="#777" stroke-width="0.6"/></svg>
<svg class="a" style="left:62.5px;top:469.5px;" width="14" height="11" viewBox="0 0 14 11"><rect x="0" y="0" width="6.3" height="5" fill="#1d8fe6"/><rect x="7" y="0" width="6.3" height="5" fill="#2aa0f0"/><rect x="0" y="5.7" width="6.3" height="5" fill="#0f7bd6"/><rect x="7" y="5.7" width="6.3" height="5" fill="#1f90e8"/></svg>
<svg class="a" style="left:88px;top:468.5px;" width="14" height="13" viewBox="0 0 14 13"><circle cx="5.5" cy="5.5" r="4.2" fill="none" stroke="#1f1f1f" stroke-width="1.5"/><path d="M8.5 8.5 L12.5 12" stroke="#1f1f1f" stroke-width="1.7"/></svg>
<svg class="a" style="left:112px;top:470px;" width="11" height="10" viewBox="0 0 11 10"><rect x="0.5" y="2" width="7" height="7.5" fill="#2a2a2a"/><rect x="3" y="0" width="7.5" height="7" fill="#b5b5b5"/><rect x="0.5" y="5" width="10" height="4.5" fill="#333"/></svg>
<svg class="a" style="left:136px;top:468.5px;" width="15" height="13" viewBox="0 0 15 13"><path d="M2 9 Q1 3 6 2 L9 2 Q13 2 13 6 Q14 11 9 11 L5 11 Q2 11 2 9Z" fill="#9a6cf0"/><path d="M6 2 Q10 1 12 4 L9 7 Q7 4 6 2Z" fill="#3aa5f5"/><path d="M2 9 Q4 7 7 8 L5 11 Q2 11 2 9Z" fill="#f07a3a"/><path d="M9 7 Q12 8 13 6 Q14 10 10 11Z" fill="#e85aa8"/></svg>
<svg class="a" style="left:160px;top:469px;" width="15" height="12" viewBox="0 0 15 12"><path d="M0.5 1.5 H6 L7 3 H14 V11 H0.5Z" fill="#f2b730"/><rect x="0.5" y="4.5" width="13.5" height="6.5" fill="#f8cd4a"/><rect x="0.5" y="8" width="13.5" height="3" fill="#1e7bd6"/></svg>
<div class="a" style="left:165.5px;top:483px;width:3px;height:1px;background:#888;"></div>
<svg class="a" style="left:184px;top:468px;" width="15" height="14" viewBox="0 0 15 14"><circle cx="8" cy="7" r="6" fill="#e3562a"/><path d="M8 1 A6 6 0 0 1 14 7 H8Z" fill="#f28b5a"/><rect x="1" y="4" width="7" height="6" rx="1" fill="#c23b18"/><path d="M3.3 8.5V5.3H5Q6.2 5.3 6.2 6.4Q6.2 7.5 5 7.5H3.3" fill="none" stroke="#fff" stroke-width="0.9"/></svg>
<div class="a" style="left:186px;top:483px;width:11px;height:1.5px;background:#1a6dd4;border-radius:1px"></div>
<svg class="a" style="left:209px;top:468.5px;" width="15" height="13" viewBox="0 0 15 13"><rect x="4" y="0.5" width="10.5" height="12" rx="1" fill="#21a366"/><rect x="4" y="4.5" width="10.5" height="4" fill="#107c41"/><rect x="0.5" y="3" width="7" height="7" rx="1" fill="#0b5e30"/><path d="M2.3 4.5 L5.7 8.5 M5.7 4.5 L2.3 8.5" stroke="#fff" stroke-width="0.9"/></svg>
<svg class="a" style="left:233.5px;top:468.5px;" width="15" height="13" viewBox="0 0 15 13"><rect x="4" y="0.5" width="10.5" height="12" rx="1" fill="#2b7cd3"/><rect x="4" y="6.5" width="10.5" height="6" fill="#185abd"/><rect x="0.5" y="3" width="7" height="7" rx="1" fill="#0f3f8f"/><path d="M1.8 4.5 L3 8.5 L4 5.5 L5 8.5 L6.2 4.5" fill="none" stroke="#fff" stroke-width="0.7"/></svg>
<div class="a" style="left:240px;top:483px;width:3px;height:1px;background:#888;"></div>
<svg class="a" style="left:257px;top:467px;" width="16" height="15" viewBox="0 0 16 15"><circle cx="7" cy="8" r="6" fill="#e74133"/><path d="M7 8 L1.8 5 A6 6 0 0 0 4 13.2Z" fill="#34a853"/><path d="M7 8 L4 13.2 A6 6 0 0 0 13 8.2Z" fill="#fbbc05"/><circle cx="7" cy="8" r="2.6" fill="#fff"/><circle cx="7" cy="8" r="2" fill="#4285f4"/><circle cx="12" cy="3.8" r="3.6" fill="#1a9a6a" stroke="#e6ecf5" stroke-width="0.8"/></svg>
<div class="a" style="left:264px;top:483px;width:3px;height:1px;background:#888;"></div>
<svg class="a" style="left:283px;top:468.5px;" width="15" height="12" viewBox="0 0 15 12"><rect x="0.5" y="1" width="10" height="10" rx="1.5" fill="#34a853"/><rect x="0.5" y="1" width="5" height="5" fill="#ea4335"/><rect x="5" y="1" width="5.5" height="5" fill="#fbbc04"/><rect x="0.5" y="6" width="5" height="5" fill="#4285f4"/><rect x="3.5" y="3.5" width="4.5" height="5" fill="#fff"/><path d="M10.5 4.5 L14.5 2 V10 L10.5 7.5Z" fill="#00832d"/></svg>
<svg class="a" style="left:307.5px;top:468.5px;" width="15" height="13" viewBox="0 0 15 13"><ellipse cx="7.3" cy="6.5" rx="7" ry="6" fill="#2d6ae8"/><path d="M3.5 6.5H11" stroke="#d8e4ff" stroke-width="0.9" stroke-dasharray="1.2 0.6"/></svg>
<div class="a" style="left:313.5px;top:483px;width:3px;height:1px;background:#888;"></div>
<svg class="a" style="left:332px;top:468px;" width="15" height="14" viewBox="0 0 15 14"><circle cx="7.3" cy="6.8" r="6" fill="none" stroke="#25b04f" stroke-width="1.5"/><path d="M1.5 13 L2.5 9.5 L4.5 11.5Z" fill="#25b04f"/><path d="M5 4.5 Q5 8.5 9.5 9.3 L10.3 8.3 L8.8 7.3 L8.2 8 Q6.6 7.3 6.2 5.8 L6.9 5.2 L6 3.8Z" fill="#25b04f"/></svg>
<div class="a" style="left:338px;top:483px;width:3px;height:1px;background:#888;"></div>
<svg class="a" style="left:667px;top:466px;" width="18" height="12" viewBox="0 0 18 12"><path d="M3 10.5 Q0.5 10.5 0.8 8 Q1 6 3.5 6 Q4.5 2.5 8.5 2.7 Q12 3 12.5 6 Q15.5 6 15.5 8.5 Q15.5 10.5 13 10.5Z" fill="#d6e6f8" stroke="#93b7e0" stroke-width="0.8"/></svg>
<div class="t" style="transform:scaleX(0.834);left:686px;top:467.62px;font-size:7.5px;color:#222;">7°C</div>
<div class="t" style="transform:scaleX(0.856);left:686px;top:474.93px;font-size:7.5px;color:#666;">Cloudy</div>
<svg class="a" style="left:757px;top:472px;" width="9" height="6" viewBox="0 0 9 6"><path d="M1 5 L4.5 1.5 L8 5" fill="none" stroke="#222" stroke-width="1"/></svg>
<svg class="a" style="left:776px;top:468.5px;" width="8" height="12" viewBox="0 0 8 12"><rect x="2" y="0.5" width="4" height="7" rx="2" fill="#2f78e0"/><path d="M0.8 5 Q0.8 9 4 9 Q7.2 9 7.2 5 M4 9 V11" fill="none" stroke="#2f78e0" stroke-width="0.9"/></svg>
<div class="t" style="transform:scaleX(0.909);left:795px;top:471.35px;font-size:7px;color:#222;">УКР</div>
<svg class="a" style="left:816px;top:470px;" width="11" height="9" viewBox="0 0 11 9"><path d="M0.5 3 Q5.5 -1.5 10.5 3 L5.5 8.5Z" fill="#777"/></svg>
<svg class="a" style="left:829px;top:470px;" width="11" height="9" viewBox="0 0 11 9"><path d="M0.5 3 H2.5 L5 0.8 V8.2 L2.5 6 H0.5Z" fill="#444"/><path d="M6.5 3 L9.5 6 M9.5 3 L6.5 6" stroke="#444" stroke-width="0.8"/></svg>
<svg class="a" style="left:843px;top:470.5px;" width="12" height="8" viewBox="0 0 12 8"><rect x="0.5" y="1" width="9.5" height="6" rx="1" fill="#222"/><rect x="10" y="3" width="1.5" height="2" fill="#222"/><path d="M2 0 L4 3" stroke="#222" stroke-width="1"/></svg>
<div class="t" style="transform:scaleX(0.878);left:877px;top:467.62px;font-size:7.5px;color:#222;">11:18</div>
<div class="t" style="transform:scaleX(0.838);left:862px;top:475.62px;font-size:7.5px;color:#222;">11.12.2025</div>
</div></body></html>
